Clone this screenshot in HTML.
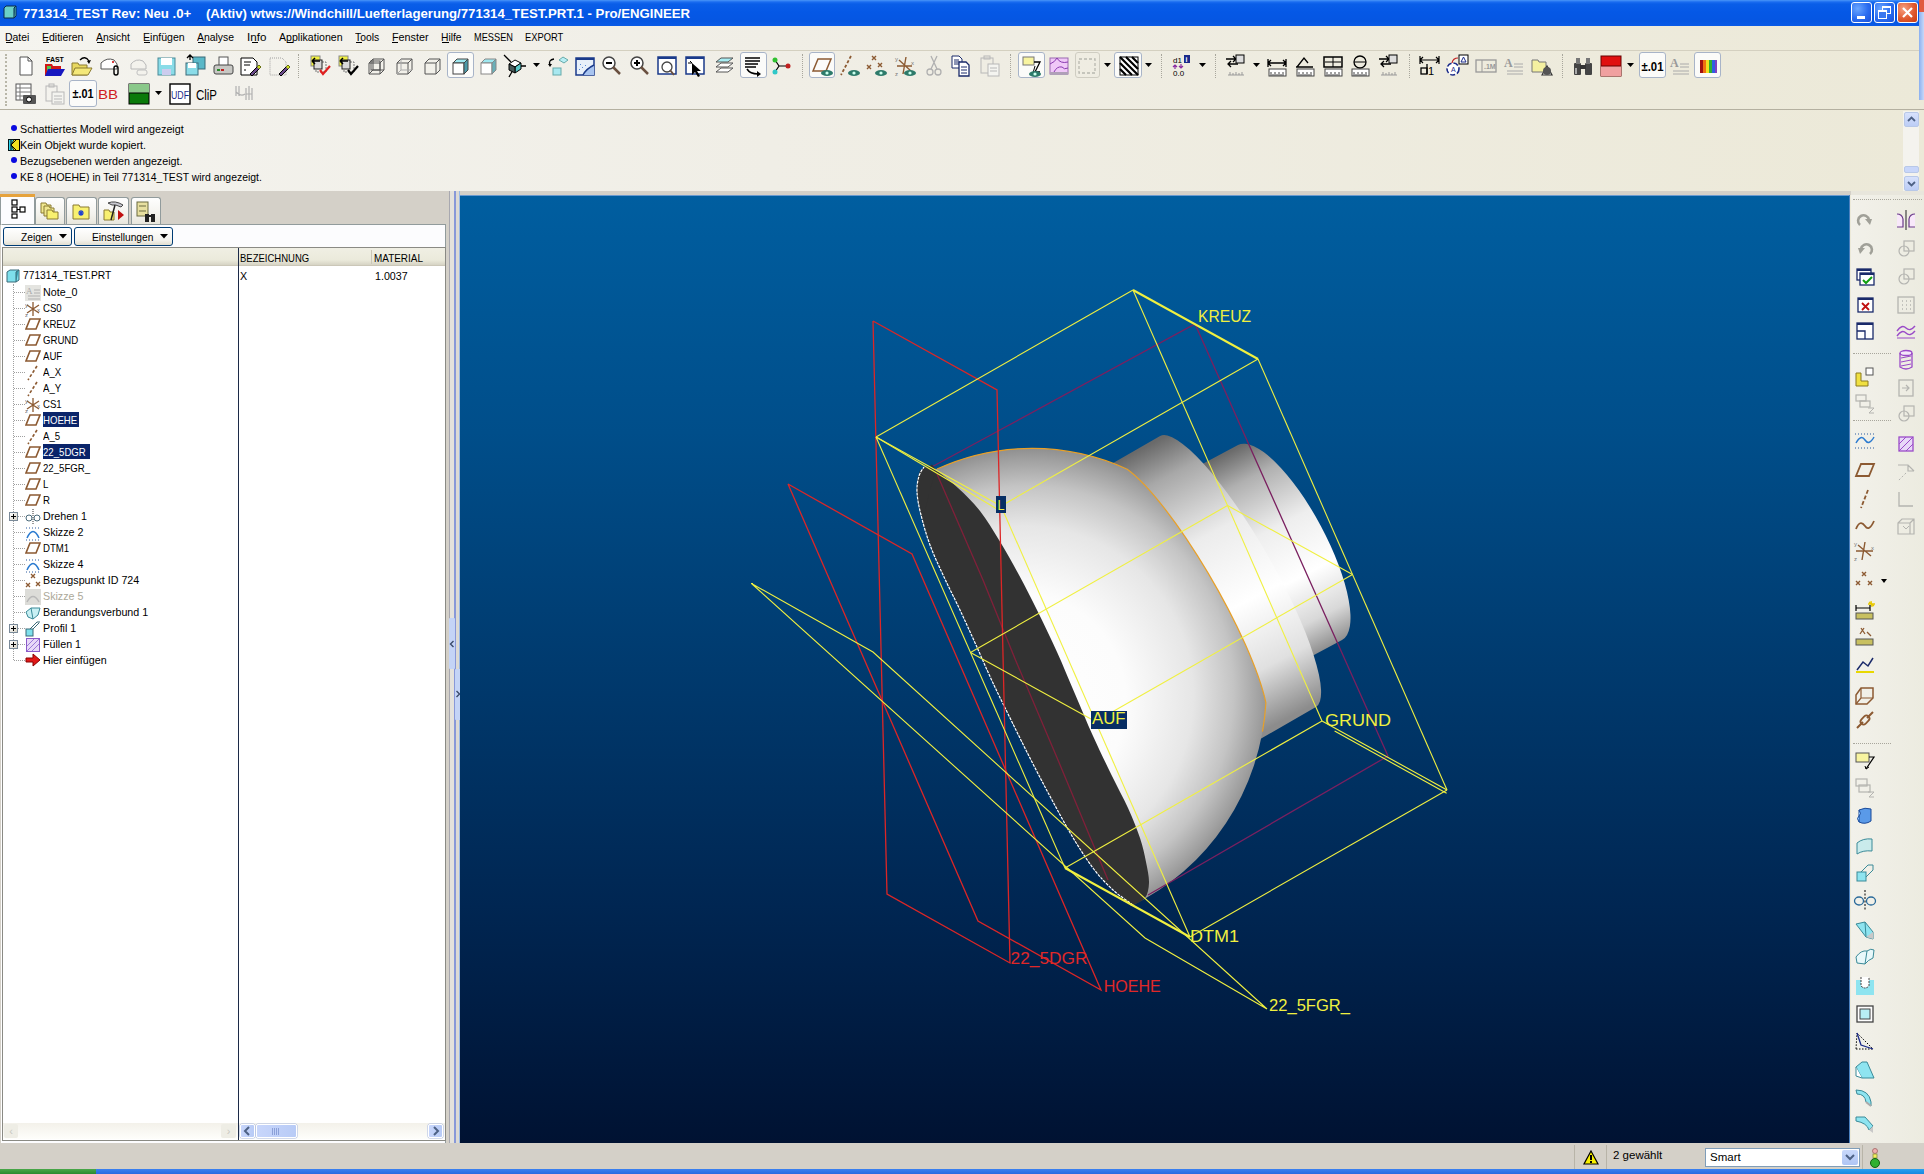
<!DOCTYPE html>
<html><head><meta charset="utf-8">
<style>
*{box-sizing:border-box}
html,body{margin:0;padding:0}
body{width:1924px;height:1174px;overflow:hidden;position:relative;background:#ECE9D8;font-family:"Liberation Sans",sans-serif;font-size:11px;color:#000}
.abs{position:absolute}
#title{left:0;top:0;width:1924px;height:26px;background:linear-gradient(#4a96f8 0px,#1a6cf0 2px,#0a5ee8 4px,#0558e6 12px,#0556e2 21px,#0a5ae6 26px)}
#title .t{position:absolute;left:23px;top:6px;color:#fff;font-weight:bold;font-size:13.2px;white-space:pre;letter-spacing:0px}
#menu{left:0;top:26px;width:1924px;height:24px;background:linear-gradient(90deg,#F5F4EF 0%,#F0EEE6 40%,#ECE9D8 100%)}
#menu span{position:absolute;white-space:pre}
#tb{left:0;top:50px;width:1924px;height:60px;background:linear-gradient(#F4F3EE,#EAE8DD 45px,#E3E0D2);border-bottom:1px solid #B9B6A9}
#msg{left:0;top:110px;width:1924px;height:81px;background:linear-gradient(90deg,#F4F3EE 0%,#F0EEE6 40%,#ECE9D8 100%)}
#msg div{position:absolute;left:20px;font-size:10.75px;white-space:pre}
#left{left:0;top:191px;width:460px;height:952px;background:#D4D0C8}
#view{left:460px;top:195px;width:1390px;height:948px;background:linear-gradient(#0062a6 0%,#00508f 20%,#003d74 45%,#002a58 70%,#001a40 90%,#001535 100%)}
#rtb{left:1850px;top:191px;width:74px;height:952px;background:#ECE9D8}
#status{left:0;top:1143px;width:1924px;height:25px;background:#D4D0C8}
#strip{left:0;top:1168px;width:1924px;height:6px;background:#2D6BDC}
</style></head><body>
<div class="abs" id="title"><div class="t">771314_TEST Rev: Neu .0+    (Aktiv) wtws://Windchill/Luefterlagerung/771314_TEST.PRT.1 - Pro/ENGINEER</div></div>
<div class="abs" id="menu">
<span style="left:5.2px;top:5px;font-size:11px;transform:scaleX(0.949);transform-origin:0 0">Datei</span>
<div class="abs" style="left:5.7px;top:16px;width:7px;height:1px;background:#000"></div>
<span style="left:42.2px;top:5px;font-size:11px;transform:scaleX(0.954);transform-origin:0 0">Editieren</span>
<div class="abs" style="left:42.7px;top:16px;width:6px;height:1px;background:#000"></div>
<span style="left:96.4px;top:5px;font-size:11px;transform:scaleX(0.939);transform-origin:0 0">Ansicht</span>
<div class="abs" style="left:96.9px;top:16px;width:7px;height:1px;background:#000"></div>
<span style="left:143.0px;top:5px;font-size:11px;transform:scaleX(0.959);transform-origin:0 0">Einfügen</span>
<div class="abs" style="left:143.5px;top:16px;width:6px;height:1px;background:#000"></div>
<span style="left:197.4px;top:5px;font-size:11px;transform:scaleX(0.946);transform-origin:0 0">Analyse</span>
<div class="abs" style="left:197.9px;top:16px;width:7px;height:1px;background:#000"></div>
<span style="left:247.2px;top:5px;font-size:11px;transform:scaleX(1.054);transform-origin:0 0">Info</span>
<div class="abs" style="left:252.2px;top:16px;width:5.5px;height:1px;background:#000"></div>
<span style="left:279.2px;top:5px;font-size:11px;transform:scaleX(0.962);transform-origin:0 0">Applikationen</span>
<div class="abs" style="left:286.7px;top:16px;width:6px;height:1px;background:#000"></div>
<span style="left:355.3px;top:5px;font-size:11px;transform:scaleX(0.938);transform-origin:0 0">Tools</span>
<div class="abs" style="left:355.8px;top:16px;width:6px;height:1px;background:#000"></div>
<span style="left:391.9px;top:5px;font-size:11px;transform:scaleX(0.981);transform-origin:0 0">Fenster</span>
<div class="abs" style="left:392.4px;top:16px;width:6px;height:1px;background:#000"></div>
<span style="left:441.0px;top:5px;font-size:11px;transform:scaleX(0.936);transform-origin:0 0">Hilfe</span>
<div class="abs" style="left:441.5px;top:16px;width:7px;height:1px;background:#000"></div>
<span style="left:473.8px;top:5px;font-size:11px;transform:scaleX(0.839);transform-origin:0 0">MESSEN</span>
<span style="left:525.2px;top:5px;font-size:11px;transform:scaleX(0.851);transform-origin:0 0">EXPORT</span>
</div>
<div class="abs" style="left:0;top:50px;width:1924px;height:60px;background:linear-gradient(90deg,#F4F3EE 0%,#F0EEE6 40%,#ECE9D8 100%);border-top:1px solid #d4d0c0;border-bottom:1px solid #b4b0a0"></div>
<div class="abs" style="left:5px;top:54px;width:2px;height:52px;border-left:2px dotted #b8b6a8"></div>
<div class="abs" style="left:447px;top:52px;width:27px;height:26px;background:#fbfbf9;border:1px solid #a8b4c8;border-radius:3px"></div>
<div class="abs" style="left:740px;top:52px;width:27px;height:26px;background:#fbfbf9;border:1px solid #a8b4c8;border-radius:3px"></div>
<div class="abs" style="left:809px;top:52px;width:26px;height:26px;background:#fbfbf9;border:1px solid #a8b4c8;border-radius:3px"></div>
<div class="abs" style="left:1018px;top:52px;width:27px;height:26px;background:#fbfbf9;border:1px solid #a8b4c8;border-radius:3px"></div>
<div class="abs" style="left:1114px;top:52px;width:28px;height:26px;background:#fbfbf9;border:1px solid #a8b4c8;border-radius:3px"></div>
<div class="abs" style="left:1639px;top:52px;width:27px;height:26px;background:#fbfbf9;border:1px solid #a8b4c8;border-radius:3px"></div>
<div class="abs" style="left:1694px;top:52px;width:27px;height:26px;background:#fbfbf9;border:1px solid #a8b4c8;border-radius:3px"></div>
<div class="abs" style="left:1075px;top:52px;width:25px;height:26px;border:1px solid #cfcdc2;border-radius:3px"></div>
<div class="abs" style="left:298px;top:54px;width:1px;height:24px;border-left:1px dotted #a8a69c"></div>
<div class="abs" style="left:802px;top:54px;width:1px;height:24px;border-left:1px dotted #a8a69c"></div>
<div class="abs" style="left:1010px;top:54px;width:1px;height:24px;border-left:1px dotted #a8a69c"></div>
<div class="abs" style="left:1161px;top:54px;width:1px;height:24px;border-left:1px dotted #a8a69c"></div>
<div class="abs" style="left:1215px;top:54px;width:1px;height:24px;border-left:1px dotted #a8a69c"></div>
<div class="abs" style="left:1409px;top:54px;width:1px;height:24px;border-left:1px dotted #a8a69c"></div>
<div class="abs" style="left:1562px;top:54px;width:1px;height:24px;border-left:1px dotted #a8a69c"></div>
<svg class="abs" style="left:533px;top:63px" width="7" height="4" viewBox="0 0 7 4"><path d="M0,0 H7 L3.5,4 Z" fill="#000"/></svg>
<svg class="abs" style="left:1104px;top:63px" width="7" height="4" viewBox="0 0 7 4"><path d="M0,0 H7 L3.5,4 Z" fill="#000"/></svg>
<svg class="abs" style="left:1145px;top:63px" width="7" height="4" viewBox="0 0 7 4"><path d="M0,0 H7 L3.5,4 Z" fill="#000"/></svg>
<svg class="abs" style="left:1199px;top:63px" width="7" height="4" viewBox="0 0 7 4"><path d="M0,0 H7 L3.5,4 Z" fill="#000"/></svg>
<svg class="abs" style="left:1253px;top:63px" width="7" height="4" viewBox="0 0 7 4"><path d="M0,0 H7 L3.5,4 Z" fill="#000"/></svg>
<svg class="abs" style="left:1627px;top:63px" width="7" height="4" viewBox="0 0 7 4"><path d="M0,0 H7 L3.5,4 Z" fill="#000"/></svg>
<svg class="abs" style="left:14px;top:54px" width="24" height="24" viewBox="0 0 24 24"><path d="M6,3 H14 L18,7 V21 H6 Z" fill="#fff" stroke="#555"/><path d="M14,3 V7 H18" fill="none" stroke="#555"/></svg>
<svg class="abs" style="left:43px;top:54px" width="24" height="24" viewBox="0 0 24 24"><text x="3" y="8" font-size="7" font-weight="bold" font-family="Liberation Sans">FAST</text><path d="M2,10 H9 L10,12 H18 V22 H2 Z" fill="#d01818"/><path d="M4,12 H8 V20 H4Z" fill="#50c850"/><path d="M5,15 H22 L18,22 H2 Z" fill="#1818c0"/></svg>
<svg class="abs" style="left:70px;top:54px" width="24" height="24" viewBox="0 0 24 24"><path d="M2,9 H8 L9,11 H17 V21 H2 Z" fill="#e8d860" stroke="#8a7a30"/><path d="M5,14 H22 L18,21 H2 Z" fill="#f4e878" stroke="#8a7a30"/><path d="M10,6 Q15,1 19,7" fill="none" stroke="#000" stroke-width="1.3"/><path d="M17,7 L21,6 L19,10Z" fill="#000"/></svg>
<svg class="abs" style="left:98px;top:54px" width="24" height="24" viewBox="0 0 24 24"><path d="M3,9 Q9,3 16,6 L19,10 V15 H3 Z" fill="#fff" stroke="#555"/><circle cx="15" cy="8" r="1" fill="#c00"/><rect x="16" y="12" width="4" height="9" rx="2" fill="none" stroke="#000" stroke-width="1.4"/></svg>
<svg class="abs" style="left:127px;top:54px" width="24" height="24" viewBox="0 0 24 24"><path d="M4,10 Q9,4 16,7 L19,11 V15 H4 Z" fill="none" stroke="#b8b8b8"/><rect x="10" y="16" width="10" height="5" rx="2" fill="none" stroke="#c0c0c0"/></svg>
<svg class="abs" style="left:154px;top:54px" width="24" height="24" viewBox="0 0 24 24"><rect x="4" y="4" width="17" height="17" fill="#8adce8" stroke="#4a8a98"/><rect x="7" y="4" width="11" height="7" fill="#fff"/><rect x="8" y="15" width="9" height="6" fill="#cce"/></svg>
<svg class="abs" style="left:183px;top:54px" width="24" height="24" viewBox="0 0 24 24"><rect x="10" y="3" width="12" height="12" fill="#5ab8c8" stroke="#3a6a78"/><rect x="3" y="9" width="12" height="12" fill="#8adce8" stroke="#3a6a78"/><rect x="5" y="9" width="8" height="5" fill="#fff"/><path d="M7,1 V6 M4,4 L7,1 L10,4" fill="none" stroke="#000" stroke-width="1.3"/></svg>
<svg class="abs" style="left:211px;top:54px" width="24" height="24" viewBox="0 0 24 24"><rect x="8" y="3" width="9" height="9" fill="#fff" stroke="#555"/><rect x="3" y="11" width="19" height="9" rx="2" fill="#c8c8c4" stroke="#444"/><rect x="6" y="15" width="3" height="2" fill="#2a8a2a"/><rect x="10" y="15" width="3" height="2" fill="#c02020"/></svg>
<svg class="abs" style="left:238px;top:54px" width="24" height="24" viewBox="0 0 24 24"><path d="M3,4 H15 L19,8 V21 H3 Z" fill="#fff" stroke="#000"/><path d="M6,8 H13 M6,11 H12 M6,16 H8" stroke="#000"/><path d="M12,20 L21,11 L23,13 L14,22 Z" fill="#6a4a8a" stroke="#000"/><path d="M19,13 L21,11 L23,13 L21,15Z" fill="#d0e020"/></svg>
<svg class="abs" style="left:267px;top:54px" width="24" height="24" viewBox="0 0 24 24"><path d="M3,4 H15 L19,8 V21 H3 Z" fill="none" stroke="#a0a0a0" stroke-dasharray="1,1"/><path d="M12,20 L21,11 L23,13 L14,22 Z" fill="#6a4a8a" stroke="#000"/><path d="M19,13 L21,11 L23,13 L21,15Z" fill="#d0e020"/></svg>
<svg class="abs" style="left:308px;top:54px" width="24" height="24" viewBox="0 0 24 24"><rect x="3" y="2" width="9" height="10" fill="#f0f040" stroke="#888"/><rect x="8" y="8" width="10" height="10" fill="none" stroke="#777" stroke-dasharray="2,1"/><rect x="6" y="6" width="8" height="9" fill="#d8d8d8" stroke="#222"/><path d="M4,7 H12 M4,7 L7,4 M4,7 L7,10" stroke="#000" stroke-width="1.5" fill="none"/><path d="M12,16 L15,20 L22,12" fill="none" stroke="#e02020" stroke-width="2.2"/></svg>
<svg class="abs" style="left:336px;top:54px" width="24" height="24" viewBox="0 0 24 24"><rect x="3" y="2" width="9" height="10" fill="#f0f040" stroke="#888"/><rect x="8" y="8" width="10" height="10" fill="none" stroke="#777" stroke-dasharray="2,1"/><rect x="6" y="6" width="8" height="9" fill="#d8d8d8" stroke="#222"/><path d="M4,7 H12 M4,7 L7,4 M4,7 L7,10" stroke="#000" stroke-width="1.5" fill="none"/><path d="M12,16 L15,20 L22,12" fill="none" stroke="#000" stroke-width="2.2"/></svg>
<svg class="abs" style="left:364px;top:54px" width="24" height="24" viewBox="0 0 24 24"><path d="M5,9 L9,5 H20 V16 L16,20 H5 Z" fill="none" stroke="#555"/><path d="M5,9 H16 V20 M16,9 L20,5" fill="none" stroke="#555"/><path d="M9,5 V16 H20 M5,20 L9,16" stroke="#555" fill="none"/><rect x="7" y="7" width="9" height="9" fill="none" stroke="#555"/></svg>
<svg class="abs" style="left:392px;top:54px" width="24" height="24" viewBox="0 0 24 24"><path d="M5,9 L9,5 H20 V16 L16,20 H5 Z" fill="none" stroke="#555"/><path d="M5,9 H16 V20 M16,9 L20,5" fill="none" stroke="#555"/><path d="M9,5 V16 H20 M5,20 L9,16" stroke="#aaa" fill="none"/></svg>
<svg class="abs" style="left:420px;top:54px" width="24" height="24" viewBox="0 0 24 24"><path d="M5,9 L9,5 H20 V16 L16,20 H5 Z" fill="none" stroke="#555"/><path d="M5,9 H16 V20 M16,9 L20,5" fill="none" stroke="#555"/></svg>
<svg class="abs" style="left:448px;top:54px" width="24" height="24" viewBox="0 0 24 24"><path d="M5,9 L9,5 H20 L16,9 Z" fill="#9ee8f0" stroke="#444"/><rect x="5" y="9" width="11" height="11" fill="#fff" stroke="#444"/><path d="M16,9 L20,5 V16 L16,20Z" fill="#4a9aa8" stroke="#444"/></svg>
<svg class="abs" style="left:476px;top:54px" width="24" height="24" viewBox="0 0 24 24"><path d="M5,9 L9,5 H20 L16,9 Z" fill="#9ee8f0" stroke="#888"/><rect x="5" y="9" width="11" height="11" fill="#fff" stroke="#888"/><path d="M16,9 L20,5 V16 L16,20Z" fill="#6ab0b8" stroke="#888"/></svg>
<svg class="abs" style="left:503px;top:54px" width="24" height="24" viewBox="0 0 24 24"><path d="M1,1 L8,8 M16,12 L23,12 M10,16 L6,23" stroke="#000" stroke-width="1.3"/><path d="M6,10 L12,6 L18,9 L12,13 Z" fill="#fff" stroke="#000"/><path d="M12,13 L18,9 V15 L12,19Z" fill="#5ac8c8" stroke="#000"/><path d="M6,10 L12,13 V19 L6,16Z" fill="#4a5a5a" stroke="#000"/></svg>
<svg class="abs" style="left:545px;top:54px" width="24" height="24" viewBox="0 0 24 24"><path d="M14,6 L18,3 L23,6 L19,9Z" fill="#b8eef4" stroke="#6aa"/><rect x="8" y="14" width="8" height="7" fill="#a8e8f0" stroke="#6aa"/><path d="M9,5 Q3,6 5,11" fill="none" stroke="#000" stroke-width="1.3"/><path d="M3,10 L5,13 L7,10Z" fill="#000"/></svg>
<svg class="abs" style="left:573px;top:54px" width="24" height="24" viewBox="0 0 24 24"><rect x="3" y="4" width="18" height="17" fill="#e8f0fa" stroke="#1a3a8a" stroke-width="1.5"/><rect x="3" y="4" width="18" height="2" fill="#1a3a8a"/><path d="M10,21 Q14,13 21,11 V21Z" fill="#a8c4f0"/><path d="M7,10 l1,1 M9,13 l1,1 M12,11 l1,1 M6,15 l1,1" stroke="#5a8ad8"/><path d="M10,21 Q13,15 21,11" fill="none" stroke="#1a3a8a" stroke-width="1.4"/></svg>
<svg class="abs" style="left:600px;top:54px" width="24" height="24" viewBox="0 0 24 24"><circle cx="9" cy="9" r="6" fill="#fff" stroke="#444" stroke-width="1.5"/><path d="M13,13 L20,20" stroke="#6a5040" stroke-width="2.5"/><path d="M6,9 H12" stroke="#000" stroke-width="2"/></svg>
<svg class="abs" style="left:628px;top:54px" width="24" height="24" viewBox="0 0 24 24"><circle cx="9" cy="9" r="6" fill="#fff" stroke="#444" stroke-width="1.5"/><path d="M13,13 L20,20" stroke="#6a5040" stroke-width="2.5"/><path d="M6,9 H12 M9,6 V12" stroke="#000" stroke-width="2"/></svg>
<svg class="abs" style="left:656px;top:54px" width="24" height="24" viewBox="0 0 24 24"><rect x="2" y="3" width="18" height="17" fill="#fff" stroke="#1a3a8a" stroke-width="1.5"/><rect x="2" y="3" width="18" height="2" fill="#1a3a8a"/><circle cx="11" cy="13" r="5" fill="none" stroke="#444" stroke-width="1.3"/><path d="M14,16 L18,21" stroke="#6a5040" stroke-width="2"/></svg>
<svg class="abs" style="left:684px;top:54px" width="24" height="24" viewBox="0 0 24 24"><rect x="2" y="3" width="18" height="17" fill="#fff" stroke="#1a3a8a" stroke-width="1.5"/><rect x="2" y="3" width="18" height="2" fill="#1a3a8a"/><path d="M8,9 V21 L11,18 L14,23 L16,22 L13,17 L17,17 Z" fill="#000"/><path d="M6,7 L8,9 M4,9 H8" stroke="#000"/></svg>
<svg class="abs" style="left:712px;top:54px" width="24" height="24" viewBox="0 0 24 24"><path d="M4,8 L9,4 H21 L16,8Z" fill="#a8eef4" stroke="#555"/><path d="M4,13 L9,9 H21 L16,13Z" fill="#fff" stroke="#555"/><path d="M4,18 L9,14 H21 L16,18Z" fill="#fff" stroke="#555"/></svg>
<svg class="abs" style="left:740px;top:54px" width="24" height="24" viewBox="0 0 24 24"><path d="M5,4 H20 M5,7 H20 M5,10 H18 M5,13 H16" stroke="#000" stroke-width="1.3"/><path d="M7,15 Q10,20 18,20" fill="none" stroke="#000" stroke-width="1.5"/><path d="M17,17 L21,20 L17,23Z" fill="#000"/></svg>
<svg class="abs" style="left:769px;top:54px" width="24" height="24" viewBox="0 0 24 24"><path d="M6,6 L10,12 L6,18 M10,12 H19" stroke="#000" stroke-width="1.2" fill="none"/><circle cx="6" cy="6" r="2.5" fill="#30c030"/><circle cx="6" cy="18" r="2.5" fill="#30c8c8"/><circle cx="19" cy="12" r="2.5" fill="#c02020"/></svg>
<svg class="abs" style="left:810px;top:54px" width="24" height="24" viewBox="0 0 24 24"><path d="M8,5 H21 L16,17 H3 Z" fill="none" stroke="#8c5a32" stroke-width="1.5"/><ellipse cx="17" cy="19" rx="6" ry="3" fill="#2d7a6a"/><circle cx="17" cy="19" r="1.6" fill="#cfe"/></svg>
<svg class="abs" style="left:838px;top:54px" width="24" height="24" viewBox="0 0 24 24"><path d="M13,2 L3,21" stroke="#8c5a32" stroke-width="1.8" stroke-dasharray="3,2"/><ellipse cx="16" cy="19" rx="6" ry="3" fill="#2d7a6a"/><circle cx="16" cy="19" r="1.6" fill="#cfe"/></svg>
<svg class="abs" style="left:865px;top:54px" width="24" height="24" viewBox="0 0 24 24"><path d="M7,2 l4,4 m0,-4 l-4,4 M2,11 l4,4 m0,-4 l-4,4 M13,9 l4,4 m0,-4 l-4,4" stroke="#8c5a32" stroke-width="1.4"/><ellipse cx="16" cy="19" rx="6" ry="3" fill="#2d7a6a"/><circle cx="16" cy="19" r="1.6" fill="#cfe"/></svg>
<svg class="abs" style="left:894px;top:54px" width="24" height="24" viewBox="0 0 24 24"><path d="M12,3 L9,20 M3,12 H18 M5,6 L17,17" stroke="#8c5a32" stroke-width="1.4"/><text x="1" y="7" font-size="6" fill="#777">y</text><text x="1" y="22" font-size="6" fill="#777">z</text><text x="17" y="11" font-size="6" fill="#777">x</text><ellipse cx="16" cy="19" rx="6" ry="3" fill="#2d7a6a"/><circle cx="16" cy="19" r="1.6" fill="#cfe"/></svg>
<svg class="abs" style="left:922px;top:54px" width="24" height="24" viewBox="0 0 24 24"><circle cx="8" cy="18" r="3" fill="none" stroke="#b0b0b0" stroke-width="1.3"/><circle cx="16" cy="18" r="3" fill="none" stroke="#b0b0b0" stroke-width="1.3"/><path d="M9,15 L15,2 M15,15 L9,2" stroke="#b0b0b0" stroke-width="1.3"/></svg>
<svg class="abs" style="left:950px;top:54px" width="24" height="24" viewBox="0 0 24 24"><path d="M2,2 H9 L12,5 V14 H2Z" fill="#fff" stroke="#1a2a6a"/><path d="M4,6 H9 M4,8 H10 M4,10 H10" stroke="#1a2a6a"/><path d="M9,8 H16 L19,11 V22 H9Z" fill="#fff" stroke="#1a2a6a" stroke-width="1.3"/><path d="M11,13 H17 M11,16 H17 M11,19 H17" stroke="#1a2a6a"/></svg>
<svg class="abs" style="left:978px;top:54px" width="24" height="24" viewBox="0 0 24 24"><rect x="3" y="4" width="12" height="15" fill="none" stroke="#b8b8b8"/><rect x="6" y="2" width="6" height="3" fill="none" stroke="#b8b8b8"/><rect x="10" y="10" width="11" height="12" fill="#f4f4f0" stroke="#b8b8b8"/><path d="M12,14 H19 M12,17 H19" stroke="#b8b8b8"/></svg>
<svg class="abs" style="left:1019px;top:54px" width="24" height="24" viewBox="0 0 24 24"><rect x="4" y="3" width="11" height="8" fill="#f8f4a0" stroke="#777"/><path d="M15,8 H21 L16,18 H21" fill="none" stroke="#000" stroke-width="1.3"/><path d="M16,12 L14,19" stroke="#000"/><ellipse cx="16" cy="20" rx="6" ry="3" fill="#2d7a6a"/><circle cx="16" cy="20" r="1.6" fill="#cfe"/></svg>
<svg class="abs" style="left:1047px;top:54px" width="24" height="24" viewBox="0 0 24 24"><rect x="3" y="4" width="18" height="16" fill="#f0c8f8" stroke="#9a6ab0"/><rect x="3" y="18" width="18" height="3" fill="#b0a0b8"/><path d="M3,10 Q8,8 10,4 M10,4 Q13,10 21,8 M7,18 Q10,12 15,13 Q17,16 21,14" fill="none" stroke="#8a3ab0"/></svg>
<svg class="abs" style="left:1075px;top:54px" width="24" height="24" viewBox="0 0 24 24"><rect x="4" y="5" width="16" height="14" fill="none" stroke="#b8b8b0" stroke-width="1.3" stroke-dasharray="3,2"/></svg>
<svg class="abs" style="left:1117px;top:54px" width="24" height="24" viewBox="0 0 24 24"><rect x="3" y="3" width="18" height="18" fill="#fff" stroke="#000"/><path d="M3,15 L9,21 M3,9 L15,21 M3,3 L21,21 M9,3 L21,15 M15,3 L21,9" stroke="#000" stroke-width="2.2"/></svg>
<svg class="abs" style="left:1170px;top:54px" width="24" height="24" viewBox="0 0 24 24"><text x="3" y="9" font-size="8" font-family="Liberation Sans">d1</text><rect x="14" y="1" width="6" height="8" fill="#1a2a8a"/><text x="15.5" y="8" font-size="7" fill="#fff" font-weight="bold">i</text><path d="M5,15 V11 M3,13 L5,11 L7,13 M11,10 V14 M9,12 L11,14 L13,12" stroke="#8a2aa0" stroke-width="1.2" fill="none"/><text x="3" y="22" font-size="8" font-family="Liberation Sans">0.0</text></svg>
<svg class="abs" style="left:1224px;top:54px" width="24" height="24" viewBox="0 0 24 24"><path d="M2,5 H12 M9,2 L12,5 L9,8 M14,10 H4 M7,7 L4,10 L7,13" stroke="#000" stroke-width="1.3" fill="none"/><rect x="12" y="1" width="8" height="8" fill="#ddd" stroke="#000"/><path d="M4,21 H20 M6,18 V21 M9,19 V21 M12,18 V21 M15,19 V21 M18,18 V21" stroke="#999"/></svg>
<svg class="abs" style="left:1265px;top:54px" width="24" height="24" viewBox="0 0 24 24"><path d="M3,5 V13 M21,5 V13 M3,9 H21 M6,6 L3,9 L6,12 M18,6 L21,9 L18,12" stroke="#000" stroke-width="1.3" fill="none"/><rect x="4" y="15" width="17" height="7" fill="#fff" stroke="#444"/><path d="M6,18 V22 M8,20 V22 M10,18 V22 M12,20 V22 M14,18 V22 M16,20 V22 M18,18 V22" stroke="#444"/></svg>
<svg class="abs" style="left:1293px;top:54px" width="24" height="24" viewBox="0 0 24 24"><path d="M3,13 H20 M4,13 L11,4 L15,9" stroke="#000" stroke-width="1.3" fill="none"/><rect x="4" y="15" width="17" height="7" fill="#fff" stroke="#444"/><path d="M6,18 V22 M8,20 V22 M10,18 V22 M12,20 V22 M14,18 V22 M16,20 V22 M18,18 V22" stroke="#444"/></svg>
<svg class="abs" style="left:1321px;top:54px" width="24" height="24" viewBox="0 0 24 24"><rect x="3" y="3" width="18" height="10" fill="none" stroke="#000" stroke-width="1.5"/><path d="M12,3 V13 M4,8 H20" stroke="#000"/><rect x="4" y="15" width="17" height="7" fill="#fff" stroke="#444"/><path d="M6,18 V22 M8,20 V22 M10,18 V22 M12,20 V22 M14,18 V22 M16,20 V22 M18,18 V22" stroke="#444"/></svg>
<svg class="abs" style="left:1348px;top:54px" width="24" height="24" viewBox="0 0 24 24"><circle cx="12" cy="8" r="6" fill="none" stroke="#000" stroke-width="1.3"/><path d="M6,8 H18" stroke="#000"/><rect x="4" y="15" width="17" height="7" fill="#fff" stroke="#444"/><path d="M6,18 V22 M8,20 V22 M10,18 V22 M12,20 V22 M14,18 V22 M16,20 V22 M18,18 V22" stroke="#444"/></svg>
<svg class="abs" style="left:1377px;top:54px" width="24" height="24" viewBox="0 0 24 24"><path d="M2,5 H12 M9,2 L12,5 L9,8 M14,10 H4 M7,7 L4,10 L7,13" stroke="#000" stroke-width="1.3" fill="none"/><rect x="12" y="1" width="8" height="8" fill="#ddd" stroke="#000"/><path d="M4,21 H20 M6,18 V21 M9,19 V21 M12,18 V21 M15,19 V21 M18,18 V21" stroke="#999"/></svg>
<svg class="abs" style="left:1418px;top:54px" width="24" height="24" viewBox="0 0 24 24"><path d="M2,2 V10 M21,2 V10 M2,6 H21 M5,3 L2,6 L5,9 M18,3 L21,6 L18,9" stroke="#000" stroke-width="1.2" fill="none"/><rect x="3" y="14" width="6" height="6" fill="none" stroke="#000" stroke-width="1.3"/><text x="10" y="21" font-size="11" font-family="Liberation Sans">1</text><path d="M9,10 V20" stroke="#000" stroke-width="1.3"/></svg>
<svg class="abs" style="left:1446px;top:54px" width="24" height="24" viewBox="0 0 24 24"><circle cx="7" cy="15" r="6" fill="#fff" stroke="#1a2a8a" stroke-width="1.6" stroke-dasharray="5,2"/><text x="5" y="18" font-size="7" fill="#1a2a8a">A</text><rect x="13" y="1" width="9" height="9" fill="#fff" stroke="#000"/><path d="M15,8 L17.5,3 L20,8Z" fill="none" stroke="#1a2a8a"/><path d="M12,4 Q7,4 6,9" fill="none" stroke="#c02020" stroke-width="1.2"/></svg>
<svg class="abs" style="left:1474px;top:54px" width="24" height="24" viewBox="0 0 24 24"><rect x="2" y="6" width="20" height="12" fill="none" stroke="#999" stroke-width="1.3"/><path d="M8,6 V18" stroke="#999"/><text x="10" y="15" font-size="7" font-weight="bold" fill="#999">.1M</text></svg>
<svg class="abs" style="left:1502px;top:54px" width="24" height="24" viewBox="0 0 24 24"><text x="2" y="13" font-size="12" font-weight="bold" fill="#999" font-family="Liberation Serif">A</text><path d="M12,10 H21 M12,13 H21 M5,17 H21 M5,20 H21" stroke="#aaa"/></svg>
<svg class="abs" style="left:1530px;top:54px" width="24" height="24" viewBox="0 0 24 24"><path d="M2,6 H8 L9,8 H16 V18 H2 Z" fill="#f4f0a0" stroke="#777"/><path d="M12,21 L17,12 L22,21Z" fill="#fff" stroke="#333" stroke-width="1.2"/><circle cx="17" cy="17" r="4" fill="#555"/></svg>
<svg class="abs" style="left:1571px;top:54px" width="24" height="24" viewBox="0 0 24 24"><rect x="3" y="9" width="7" height="12" rx="1" fill="#444"/><rect x="14" y="9" width="7" height="12" rx="1" fill="#444"/><rect x="5" y="4" width="4" height="6" fill="#777"/><rect x="15" y="4" width="4" height="6" fill="#777"/><rect x="9" y="11" width="6" height="4" fill="#333"/><rect x="4" y="14" width="2" height="6" fill="#aaa"/></svg>
<svg class="abs" style="left:1599px;top:54px" width="24" height="24" viewBox="0 0 24 24"><rect x="2" y="2" width="20" height="20" fill="#e01010" stroke="#600"/><rect x="2" y="12" width="20" height="10" fill="#f0a0a0"/><path d="M2,12 H22" stroke="#600"/></svg>
<svg class="abs" style="left:1640px;top:54px" width="24" height="24" viewBox="0 0 24 24"><text x="1.5" y="17" font-size="13" font-weight="bold" font-family="Liberation Sans" textLength="22" lengthAdjust="spacingAndGlyphs">±.01</text></svg>
<svg class="abs" style="left:1668px;top:54px" width="24" height="24" viewBox="0 0 24 24"><text x="2" y="13" font-size="12" font-weight="bold" fill="#999" font-family="Liberation Serif">A</text><path d="M12,10 H21 M12,13 H21 M5,17 H21 M5,20 H21" stroke="#aaa"/></svg>
<svg class="abs" style="left:1696px;top:54px" width="24" height="24" viewBox="0 0 24 24"><rect x="4" y="6" width="3" height="13" fill="#a01010"/><rect x="7" y="6" width="3" height="13" fill="#f07010"/><rect x="10" y="6" width="3" height="13" fill="#f0e020"/><rect x="13" y="6" width="3" height="13" fill="#30b030"/><rect x="16" y="6" width="3" height="13" fill="#3060e0"/><rect x="19" y="6" width="2" height="13" fill="#8040c0"/></svg>
<div class="abs" style="left:69px;top:80px;width:28px;height:27px;background:#fbfbf9;border:1px solid #a8b4c8;border-radius:3px"></div>
<svg class="abs" style="left:14px;top:82px" width="24" height="24" viewBox="0 0 24 24"><rect x="2" y="2" width="15" height="16" fill="#fff" stroke="#555"/><path d="M2,6 H17 M2,10 H17 M2,14 H17 M6,2 V18" stroke="#777"/><rect x="9" y="13" width="13" height="9" rx="1" fill="#555"/><circle cx="15" cy="17.5" r="2.5" fill="#fff" stroke="#000"/></svg>
<svg class="abs" style="left:43px;top:82px" width="24" height="24" viewBox="0 0 24 24"><rect x="3" y="4" width="11" height="15" fill="none" stroke="#b8b8b8"/><rect x="6" y="2" width="5" height="3" fill="none" stroke="#b8b8b8"/><rect x="9" y="10" width="12" height="12" fill="#f4f4f0" stroke="#b8b8b8"/><path d="M11,14 H19 M11,17 H19 M11,20 H19" stroke="#b8b8b8"/></svg>
<svg class="abs" style="left:71px;top:82px" width="24" height="24" viewBox="0 0 24 24"><text x="1.5" y="16" font-size="13" font-weight="bold" font-family="Liberation Sans" textLength="21" lengthAdjust="spacingAndGlyphs">±.01</text></svg>
<svg class="abs" style="left:96px;top:82px" width="24" height="24" viewBox="0 0 24 24"><text x="2" y="17" font-size="13" fill="#d02020" font-family="Liberation Sans" textLength="20" lengthAdjust="spacingAndGlyphs">BB</text></svg>
<svg class="abs" style="left:127px;top:82px" width="24" height="24" viewBox="0 0 24 24"><rect x="2" y="2" width="20" height="20" fill="#0a7a0a" stroke="#000"/><rect x="2" y="2" width="20" height="9" fill="#8ac88a"/><path d="M2,11 H22" stroke="#000"/></svg>
<svg class="abs" style="left:155px;top:91px" width="7" height="4" viewBox="0 0 7 4"><path d="M0,0 H7 L3.5,4 Z" fill="#000"/></svg>
<svg class="abs" style="left:168px;top:82px" width="24" height="24" viewBox="0 0 24 24"><rect x="2" y="2" width="20" height="20" fill="#fff" stroke="#000" stroke-width="1.4"/><text x="3" y="17" font-size="11" fill="#1a2a8a" font-family="Liberation Sans" textLength="18" lengthAdjust="spacingAndGlyphs">UDF</text></svg>
<svg class="abs" style="left:195px;top:82px" width="24" height="24" viewBox="0 0 24 24"><text x="1" y="18" font-size="14" font-family="Liberation Sans" textLength="21" lengthAdjust="spacingAndGlyphs">CliP</text></svg>
<svg class="abs" style="left:233px;top:82px" width="24" height="24" viewBox="0 0 24 24"><path d="M3,4 V14 M6,4 V14 M3,10 Q8,15 12,12 M13,6 V18 M16,4 V18 M19,6 V18 M13,12 H19" stroke="#b0b0b0" stroke-width="1.2" fill="none"/></svg>
<div id="msg" class="abs">
<div style="top:13px">Schattiertes Modell wird angezeigt</div>
<div style="top:29px">Kein Objekt wurde kopiert.</div>
<div style="top:45px">Bezugsebenen werden angezeigt.</div>
<div style="top:61px;transform:scaleX(0.97);transform-origin:0 0">KE 8 (HOEHE) in Teil 771314_TEST wird angezeigt.</div>
</div>
<div class="abs" style="left:0;top:191px;width:1924px;height:4px;background:#D4D0C8"></div>
<div class="abs" style="left:0;top:191px;width:460px;height:953px;background:#D4D0C8"></div>
<div class="abs" style="left:0;top:194px;width:35px;height:31px;background:#FCFCFE;border-left:1px solid #919b9c;border-right:1px solid #919b9c"></div>
<div class="abs" style="left:0;top:194px;width:35px;height:3px;background:#E6A23C"></div>
<div class="abs" style="left:35px;top:197px;width:30px;height:27px;background:linear-gradient(#fefefe,#f4f3ee 60%,#e8e6dc);border:1px solid #919b9c;border-bottom:none;border-radius:3px 3px 0 0"></div>
<div class="abs" style="left:66px;top:197px;width:31px;height:27px;background:linear-gradient(#fefefe,#f4f3ee 60%,#e8e6dc);border:1px solid #919b9c;border-bottom:none;border-radius:3px 3px 0 0"></div>
<div class="abs" style="left:98px;top:197px;width:31px;height:27px;background:linear-gradient(#fefefe,#f4f3ee 60%,#e8e6dc);border:1px solid #919b9c;border-bottom:none;border-radius:3px 3px 0 0"></div>
<div class="abs" style="left:131px;top:197px;width:30px;height:27px;background:linear-gradient(#fefefe,#f4f3ee 60%,#e8e6dc);border:1px solid #919b9c;border-bottom:none;border-radius:3px 3px 0 0"></div>
<svg class="abs" style="left:10px;top:199px" width="18" height="20"><rect x="2" y="1" width="5" height="5" fill="#fff" stroke="#000" stroke-width="1.2"/><rect x="2" y="8" width="5" height="5" fill="#fff" stroke="#000" stroke-width="1.2"/><rect x="2" y="15" width="5" height="4" fill="#fff" stroke="#000" stroke-width="1.2"/><rect x="10" y="8" width="5" height="5" fill="#fff" stroke="#000" stroke-width="1.2"/><path d="M7,10.5 H10" stroke="#000"/></svg>
<svg class="abs" style="left:40px;top:201px" width="20" height="20"><path d="M1,2 h5 l1,2 h4 v8 h-10z" fill="#f0e890" stroke="#8a7a30"/><path d="M4,5 h5 l1,2 h4 v8 h-10z" fill="#f0e890" stroke="#8a7a30"/><path d="M7,9 h5 l1,2 h5 v7 h-11z" fill="#f8f070" stroke="#8a7a30"/></svg>
<svg class="abs" style="left:72px;top:203px" width="20" height="18"><path d="M1,2 h6 l1,2 h9 v12 h-16z" fill="#f8f070" stroke="#8a7a30"/><path d="M9,7 v6 M6,10 h6 M7,8 l4,4 M11,8 l-4,4" stroke="#2040d0" stroke-width="1.2"/></svg>
<svg class="abs" style="left:103px;top:201px" width="22" height="20"><path d="M1,9 h5 l1,2 h4 v8 h-10z" fill="#f8f070" stroke="#8a7a30"/><path d="M5,2 Q12,-1 20,4 L18,6 Q12,3 9,4 Z" fill="#c8c8d0" stroke="#444"/><path d="M12,4 L8,19" stroke="#222" stroke-width="1.5"/><path d="M15,9 L21,14 L15,19 Z" fill="#c01010"/></svg>
<svg class="abs" style="left:136px;top:201px" width="22" height="22"><rect x="1" y="1" width="11" height="14" fill="#e8e0a0" stroke="#6a6a40"/><path d="M3,5 h7 M3,10 h7" stroke="#6a6a40"/><path d="M9,13 h4 v8 h-4z M15,13 h4 v8 h-4z" fill="#222"/><path d="M12,15 h4" stroke="#222" stroke-width="2"/></svg>
<div class="abs" style="left:1px;top:224px;width:445px;height:919px;background:#FCFCFE;border-top:1px solid #919b9c;border-right:1px solid #919b9c;border-left:1px solid #ffffff"></div>
<div class="abs" style="left:3px;top:227px;width:69px;height:19px;border:1px solid #003c74;border-radius:3px;background:linear-gradient(#ffffff,#f4f3ee 70%,#e2ded0)"><span class="abs" style="left:17px;top:2.5px;font-size:11px;transform:scaleX(0.93);transform-origin:0 0;white-space:nowrap">Zeigen</span><svg class="abs" style="left:55px;top:6px" width="8" height="5"><path d="M0,0 H8 L4,4.5 Z" fill="#000"/></svg></div>
<div class="abs" style="left:74px;top:227px;width:99px;height:19px;border:1px solid #003c74;border-radius:3px;background:linear-gradient(#ffffff,#f4f3ee 70%,#e2ded0)"><span class="abs" style="left:17px;top:2.5px;font-size:11px;transform:scaleX(0.93);transform-origin:0 0;white-space:nowrap">Einstellungen</span><svg class="abs" style="left:85px;top:6px" width="8" height="5"><path d="M0,0 H8 L4,4.5 Z" fill="#000"/></svg></div>
<div class="abs" style="left:2px;top:247px;width:444px;height:894px;border:1px solid #8a8a84;background:#fff"></div>
<div class="abs" style="left:3px;top:248px;width:442px;height:18px;background:linear-gradient(#f0efe4,#ebeadb 70%,#d6d3c4);border-bottom:1px solid #cbc7b8"></div>
<div class="abs" style="left:371px;top:250px;width:1px;height:14px;background:#cbc7b8"></div>
<div class="abs" style="left:238px;top:248px;width:1px;height:892px;background:#1c2a48"></div>
<div class="abs" style="left:240px;top:251.5px;font-size:10.7px;transform:scaleX(0.89);transform-origin:0 0">BEZEICHNUNG</div>
<div class="abs" style="left:374px;top:251.5px;font-size:10.7px;transform:scaleX(0.93);transform-origin:0 0">MATERIAL</div>
<div class="abs" style="left:240px;top:269.5px;font-size:10.7px">X</div>
<div class="abs" style="left:375px;top:269.5px;font-size:10.7px">1.0037</div>
<div class="abs" style="left:13px;top:284px;width:1px;height:376px;border-left:1px dotted #a0a0a0"></div>
<div class="abs" style="left:6px;top:268.5px;width:14px;height:14px"><svg width="14" height="14"><path d="M1,3 L4,1 L13,1 L13,11 L10,13 L1,13 Z" fill="#7ee0ec" stroke="#3a6a78" stroke-width="1"/><path d="M10,13 L10,3 L13,1" fill="#3aa0b0" stroke="#3a6a78"/></svg></div>
<div class="abs" style="left:23px;top:269.0px;font-size:10.7px;transform:scaleX(0.96);transform-origin:0 0;white-space:nowrap">771314_TEST.PRT</div>
<div class="abs" style="left:14px;top:291.5px;width:11px;height:1px;border-top:1px dotted #a0a0a0"></div>
<div class="abs" style="left:25px;top:284.5px;width:16px;height:16px"><svg width="16" height="16"><rect x="0" y="0" width="16" height="16" fill="#e4e4e0"/><text x="1" y="9" font-size="9" fill="#a8a8a8" font-family="Liberation Serif">A</text><path d="M9,5 H15 M9,8 H15 M3,11 H15 M3,14 H15" stroke="#b0b0b0"/></svg></div>
<div class="abs" style="left:43px;top:285.8px;font-size:10.7px;color:#000;white-space:nowrap;transform:scaleX(1.0);transform-origin:0 0">Note_0</div>
<div class="abs" style="left:14px;top:307.5px;width:11px;height:1px;border-top:1px dotted #a0a0a0"></div>
<div class="abs" style="left:25px;top:300.5px;width:16px;height:16px"><svg width="16" height="16"><path d="M8,1 L8,15 M2,4 L14,12 M2,12 L14,4" stroke="#8c5a32" stroke-width="1.3"/><text x="0" y="6" font-size="6" fill="#666">y</text><text x="0" y="16" font-size="6" fill="#666">z</text><text x="12" y="11" font-size="6" fill="#666">x</text></svg></div>
<div class="abs" style="left:43px;top:301.8px;font-size:10.7px;color:#000;white-space:nowrap;transform:scaleX(0.9);transform-origin:0 0">CS0</div>
<div class="abs" style="left:14px;top:323.5px;width:11px;height:1px;border-top:1px dotted #a0a0a0"></div>
<div class="abs" style="left:25px;top:316.5px;width:16px;height:16px"><svg width="16" height="14"><path d="M5,2 L15,2 L11,12 L1,12 Z" fill="none" stroke="#8c5a32" stroke-width="1.6"/></svg></div>
<div class="abs" style="left:43px;top:317.8px;font-size:10.7px;color:#000;white-space:nowrap;transform:scaleX(0.9);transform-origin:0 0">KREUZ</div>
<div class="abs" style="left:14px;top:339.5px;width:11px;height:1px;border-top:1px dotted #a0a0a0"></div>
<div class="abs" style="left:25px;top:332.5px;width:16px;height:16px"><svg width="16" height="14"><path d="M5,2 L15,2 L11,12 L1,12 Z" fill="none" stroke="#8c5a32" stroke-width="1.6"/></svg></div>
<div class="abs" style="left:43px;top:333.8px;font-size:10.7px;color:#000;white-space:nowrap;transform:scaleX(0.9);transform-origin:0 0">GRUND</div>
<div class="abs" style="left:14px;top:355.5px;width:11px;height:1px;border-top:1px dotted #a0a0a0"></div>
<div class="abs" style="left:25px;top:348.5px;width:16px;height:16px"><svg width="16" height="14"><path d="M5,2 L15,2 L11,12 L1,12 Z" fill="none" stroke="#8c5a32" stroke-width="1.6"/></svg></div>
<div class="abs" style="left:43px;top:349.8px;font-size:10.7px;color:#000;white-space:nowrap;transform:scaleX(0.9);transform-origin:0 0">AUF</div>
<div class="abs" style="left:14px;top:371.5px;width:11px;height:1px;border-top:1px dotted #a0a0a0"></div>
<div class="abs" style="left:25px;top:364.5px;width:16px;height:16px"><svg width="16" height="16"><path d="M12,1 L3,15" stroke="#8c5a32" stroke-width="1.6" stroke-dasharray="3,2"/></svg></div>
<div class="abs" style="left:43px;top:365.8px;font-size:10.7px;color:#000;white-space:nowrap;transform:scaleX(0.9);transform-origin:0 0">A_X</div>
<div class="abs" style="left:14px;top:387.5px;width:11px;height:1px;border-top:1px dotted #a0a0a0"></div>
<div class="abs" style="left:25px;top:380.5px;width:16px;height:16px"><svg width="16" height="16"><path d="M12,1 L3,15" stroke="#8c5a32" stroke-width="1.6" stroke-dasharray="3,2"/></svg></div>
<div class="abs" style="left:43px;top:381.8px;font-size:10.7px;color:#000;white-space:nowrap;transform:scaleX(0.9);transform-origin:0 0">A_Y</div>
<div class="abs" style="left:14px;top:403.5px;width:11px;height:1px;border-top:1px dotted #a0a0a0"></div>
<div class="abs" style="left:25px;top:396.5px;width:16px;height:16px"><svg width="16" height="16"><path d="M8,1 L8,15 M2,4 L14,12 M2,12 L14,4" stroke="#8c5a32" stroke-width="1.3"/><text x="0" y="6" font-size="6" fill="#666">y</text><text x="0" y="16" font-size="6" fill="#666">z</text><text x="12" y="11" font-size="6" fill="#666">x</text></svg></div>
<div class="abs" style="left:43px;top:397.8px;font-size:10.7px;color:#000;white-space:nowrap;transform:scaleX(0.9);transform-origin:0 0">CS1</div>
<div class="abs" style="left:14px;top:419.5px;width:11px;height:1px;border-top:1px dotted #a0a0a0"></div>
<div class="abs" style="left:25px;top:412.5px;width:16px;height:16px"><svg width="16" height="14"><path d="M5,2 L15,2 L11,12 L1,12 Z" fill="none" stroke="#8c5a32" stroke-width="1.6"/></svg></div>
<div class="abs" style="left:43px;top:412.0px;width:36px;height:14.5px;background:#0a246a"></div>
<div class="abs" style="left:43px;top:413.8px;font-size:10.7px;color:#fff;white-space:nowrap;transform:scaleX(0.9);transform-origin:0 0">HOEHE</div>
<div class="abs" style="left:14px;top:435.5px;width:11px;height:1px;border-top:1px dotted #a0a0a0"></div>
<div class="abs" style="left:25px;top:428.5px;width:16px;height:16px"><svg width="16" height="16"><path d="M12,1 L3,15" stroke="#8c5a32" stroke-width="1.6" stroke-dasharray="3,2"/></svg></div>
<div class="abs" style="left:43px;top:429.8px;font-size:10.7px;color:#000;white-space:nowrap;transform:scaleX(0.9);transform-origin:0 0">A_5</div>
<div class="abs" style="left:14px;top:451.5px;width:11px;height:1px;border-top:1px dotted #a0a0a0"></div>
<div class="abs" style="left:25px;top:444.5px;width:16px;height:16px"><svg width="16" height="14"><path d="M5,2 L15,2 L11,12 L1,12 Z" fill="none" stroke="#8c5a32" stroke-width="1.6"/></svg></div>
<div class="abs" style="left:43px;top:444.0px;width:47px;height:14.5px;background:#0a246a"></div>
<div class="abs" style="left:43px;top:445.8px;font-size:10.7px;color:#fff;white-space:nowrap;transform:scaleX(0.9);transform-origin:0 0">22_5DGR</div>
<div class="abs" style="left:14px;top:467.5px;width:11px;height:1px;border-top:1px dotted #a0a0a0"></div>
<div class="abs" style="left:25px;top:460.5px;width:16px;height:16px"><svg width="16" height="14"><path d="M5,2 L15,2 L11,12 L1,12 Z" fill="none" stroke="#8c5a32" stroke-width="1.6"/></svg></div>
<div class="abs" style="left:43px;top:461.8px;font-size:10.7px;color:#000;white-space:nowrap;transform:scaleX(0.9);transform-origin:0 0">22_5FGR_</div>
<div class="abs" style="left:14px;top:483.5px;width:11px;height:1px;border-top:1px dotted #a0a0a0"></div>
<div class="abs" style="left:25px;top:476.5px;width:16px;height:16px"><svg width="16" height="14"><path d="M5,2 L15,2 L11,12 L1,12 Z" fill="none" stroke="#8c5a32" stroke-width="1.6"/></svg></div>
<div class="abs" style="left:43px;top:477.8px;font-size:10.7px;color:#000;white-space:nowrap;transform:scaleX(0.9);transform-origin:0 0">L</div>
<div class="abs" style="left:14px;top:499.5px;width:11px;height:1px;border-top:1px dotted #a0a0a0"></div>
<div class="abs" style="left:25px;top:492.5px;width:16px;height:16px"><svg width="16" height="14"><path d="M5,2 L15,2 L11,12 L1,12 Z" fill="none" stroke="#8c5a32" stroke-width="1.6"/></svg></div>
<div class="abs" style="left:43px;top:493.8px;font-size:10.7px;color:#000;white-space:nowrap;transform:scaleX(0.9);transform-origin:0 0">R</div>
<div class="abs" style="left:14px;top:515.5px;width:11px;height:1px;border-top:1px dotted #a0a0a0"></div>
<div class="abs" style="left:9px;top:511.5px;width:9px;height:9px;border:1px solid #7a8a99;background:linear-gradient(135deg,#fff,#d8d4c8)"><div class="abs" style="left:1px;top:3px;width:5px;height:1px;background:#000"></div><div class="abs" style="left:3px;top:1px;width:1px;height:5px;background:#000"></div></div>
<div class="abs" style="left:25px;top:508.5px;width:16px;height:16px"><svg width="16" height="16"><path d="M8,0 V16" stroke="#333" stroke-dasharray="1,1"/><ellipse cx="4" cy="9" rx="3" ry="3" fill="none" stroke="#4a6a7a"/><ellipse cx="12" cy="9" rx="3" ry="3" fill="none" stroke="#4a6a7a"/></svg></div>
<div class="abs" style="left:43px;top:509.8px;font-size:10.7px;color:#000;white-space:nowrap;transform:scaleX(1.0);transform-origin:0 0">Drehen 1</div>
<div class="abs" style="left:14px;top:531.5px;width:11px;height:1px;border-top:1px dotted #a0a0a0"></div>
<div class="abs" style="left:25px;top:524.5px;width:16px;height:16px"><svg width="16" height="16"><path d="M2,13 Q8,0 14,13" fill="none" stroke="#2a7ad0" stroke-width="1.5"/><path d="M1,3 H15 M1,15 H15" stroke="#2a5aa0" stroke-dasharray="1,2"/></svg></div>
<div class="abs" style="left:43px;top:525.8px;font-size:10.7px;color:#000;white-space:nowrap;transform:scaleX(1.0);transform-origin:0 0">Skizze 2</div>
<div class="abs" style="left:14px;top:547.5px;width:11px;height:1px;border-top:1px dotted #a0a0a0"></div>
<div class="abs" style="left:25px;top:540.5px;width:16px;height:16px"><svg width="16" height="14"><path d="M5,2 L15,2 L11,12 L1,12 Z" fill="none" stroke="#8c5a32" stroke-width="1.6"/></svg></div>
<div class="abs" style="left:43px;top:541.8px;font-size:10.7px;color:#000;white-space:nowrap;transform:scaleX(0.9);transform-origin:0 0">DTM1</div>
<div class="abs" style="left:14px;top:563.5px;width:11px;height:1px;border-top:1px dotted #a0a0a0"></div>
<div class="abs" style="left:25px;top:556.5px;width:16px;height:16px"><svg width="16" height="16"><path d="M2,13 Q8,0 14,13" fill="none" stroke="#2a7ad0" stroke-width="1.5"/><path d="M1,3 H15 M1,15 H15" stroke="#2a5aa0" stroke-dasharray="1,2"/></svg></div>
<div class="abs" style="left:43px;top:557.8px;font-size:10.7px;color:#000;white-space:nowrap;transform:scaleX(1.0);transform-origin:0 0">Skizze 4</div>
<div class="abs" style="left:14px;top:579.5px;width:11px;height:1px;border-top:1px dotted #a0a0a0"></div>
<div class="abs" style="left:25px;top:572.5px;width:16px;height:16px"><svg width="16" height="16"><path d="M6,1 L10,5 M10,1 L6,5 M1,10 L5,14 M5,10 L1,14 M11,9 L15,13 M15,9 L11,13" stroke="#8c5a32" stroke-width="1.3"/></svg></div>
<div class="abs" style="left:43px;top:573.8px;font-size:10.7px;color:#000;white-space:nowrap;transform:scaleX(1.0);transform-origin:0 0">Bezugspunkt ID 724</div>
<div class="abs" style="left:14px;top:595.5px;width:11px;height:1px;border-top:1px dotted #a0a0a0"></div>
<div class="abs" style="left:25px;top:588.5px;width:16px;height:16px"><svg width="16" height="16"><rect width="16" height="16" fill="#dcdcd8"/><path d="M2,13 Q8,2 14,13" fill="none" stroke="#b8b8b8" stroke-width="1.5"/></svg></div>
<div class="abs" style="left:43px;top:589.8px;font-size:10.7px;color:#aca899;white-space:nowrap;transform:scaleX(1.0);transform-origin:0 0">Skizze 5</div>
<div class="abs" style="left:14px;top:611.5px;width:11px;height:1px;border-top:1px dotted #a0a0a0"></div>
<div class="abs" style="left:25px;top:604.5px;width:16px;height:16px"><svg width="16" height="16"><path d="M1,7 L6,3 L15,3 L13,10 L8,14 L3,12 Z" fill="#c8f0f4" stroke="#3a8a98"/><path d="M6,3 L8,14" stroke="#3a8a98"/></svg></div>
<div class="abs" style="left:43px;top:605.8px;font-size:10.7px;color:#000;white-space:nowrap;transform:scaleX(1.0);transform-origin:0 0">Berandungsverbund 1</div>
<div class="abs" style="left:14px;top:627.5px;width:11px;height:1px;border-top:1px dotted #a0a0a0"></div>
<div class="abs" style="left:9px;top:623.5px;width:9px;height:9px;border:1px solid #7a8a99;background:linear-gradient(135deg,#fff,#d8d4c8)"><div class="abs" style="left:1px;top:3px;width:5px;height:1px;background:#000"></div><div class="abs" style="left:3px;top:1px;width:1px;height:5px;background:#000"></div></div>
<div class="abs" style="left:25px;top:620.5px;width:16px;height:16px"><svg width="16" height="16"><rect x="1" y="8" width="7" height="7" fill="#7ee0ec" stroke="#3a6a78"/><path d="M5,8 L12,1 L15,1 M8,8 L14,2" fill="none" stroke="#3a6a78"/></svg></div>
<div class="abs" style="left:43px;top:621.8px;font-size:10.7px;color:#000;white-space:nowrap;transform:scaleX(1.0);transform-origin:0 0">Profil 1</div>
<div class="abs" style="left:14px;top:643.5px;width:11px;height:1px;border-top:1px dotted #a0a0a0"></div>
<div class="abs" style="left:9px;top:639.5px;width:9px;height:9px;border:1px solid #7a8a99;background:linear-gradient(135deg,#fff,#d8d4c8)"><div class="abs" style="left:1px;top:3px;width:5px;height:1px;background:#000"></div><div class="abs" style="left:3px;top:1px;width:1px;height:5px;background:#000"></div></div>
<div class="abs" style="left:25px;top:636.5px;width:16px;height:16px"><svg width="16" height="16"><rect x="1.5" y="1.5" width="13" height="13" fill="#e8d8f8" stroke="#8a5ac8"/><path d="M2,9 L9,2 M2,14 L14,2 M7,14 L14,7" stroke="#9a7ad8"/></svg></div>
<div class="abs" style="left:43px;top:637.8px;font-size:10.7px;color:#000;white-space:nowrap;transform:scaleX(1.0);transform-origin:0 0">Füllen 1</div>
<div class="abs" style="left:14px;top:659.5px;width:11px;height:1px;border-top:1px dotted #a0a0a0"></div>
<div class="abs" style="left:25px;top:652.5px;width:16px;height:16px"><svg width="16" height="14"><path d="M1,5 H8 V1 L15,7 L8,13 V9 H1 Z" fill="#e01818" stroke="#800"/></svg></div>
<div class="abs" style="left:43px;top:653.8px;font-size:10.7px;color:#000;white-space:nowrap;transform:scaleX(1.0);transform-origin:0 0">Hier einfügen</div>
<div class="abs" style="left:3px;top:1123px;width:235px;height:16px;background:linear-gradient(#f3f1ea,#fefefb)"></div>
<div class="abs" style="left:4px;top:1124px;width:14px;height:14px;background:#eeede5;border-radius:2px;color:#c8c8c0;font-size:11px;text-align:center;line-height:14px">&lsaquo;</div>
<div class="abs" style="left:221px;top:1124px;width:15px;height:14px;background:#eeede5;border-radius:2px;color:#c8c8c0;font-size:11px;text-align:center;line-height:14px">&rsaquo;</div>
<div class="abs" style="left:239px;top:1123px;width:206px;height:16px;background:linear-gradient(#f3f1ea,#fefefb)"></div>
<div class="abs" style="left:240px;top:1124px;width:15px;height:14px;background:linear-gradient(90deg,#c8d6fb,#b8cbf6);border:1px solid #fff;border-radius:2px;box-shadow:0 0 0 0.5px #a8b8e0"><svg width="13" height="12"><path d="M8,2 L4,6 L8,10" fill="none" stroke="#4d6185" stroke-width="2"/></svg></div>
<div class="abs" style="left:256px;top:1124px;width:41px;height:14px;background:linear-gradient(90deg,#c8d6fb,#b8cbf6);border:1px solid #fff;border-radius:2px;box-shadow:0 0 0 0.5px #a8b8e0"><svg width="39" height="12" shape-rendering="crispEdges"><rect x="15" y="3" width="1" height="7" fill="#8ba0d8"/><rect x="17" y="3" width="1" height="7" fill="#8ba0d8"/><rect x="19" y="3" width="1" height="7" fill="#8ba0d8"/><rect x="21" y="3" width="1" height="7" fill="#8ba0d8"/></svg></div>
<div class="abs" style="left:428px;top:1124px;width:15px;height:14px;background:linear-gradient(90deg,#c8d6fb,#b8cbf6);border:1px solid #fff;border-radius:2px;box-shadow:0 0 0 0.5px #a8b8e0"><svg width="13" height="12"><path d="M5,2 L9,6 L5,10" fill="none" stroke="#4d6185" stroke-width="2"/></svg></div>
<div class="abs" style="left:449px;top:191px;width:1px;height:953px;background:#a8a8b0"></div>
<div class="abs" style="left:450px;top:191px;width:4px;height:953px;background:#e4e2dc"></div>
<div class="abs" style="left:454px;top:191px;width:2px;height:953px;background:#8898d8"></div>
<div class="abs" style="left:456px;top:191px;width:3px;height:953px;background:#dcdad4"></div>
<div class="abs" style="left:459px;top:191px;width:1px;height:953px;background:#98b8e8"></div>
<div class="abs" style="left:449px;top:618px;width:6px;height:51px;background:#c4d4f6;border-radius:1px"></div>
<div class="abs" style="left:455px;top:669px;width:6px;height:51px;background:#c4d4f6;border-radius:1px"></div>
<svg class="abs" style="left:449px;top:640px" width="6" height="8"><path d="M4.5,1 L1.5,4 L4.5,7" fill="none" stroke="#3a4a6a" stroke-width="1.4"/></svg>
<svg class="abs" style="left:455px;top:690px" width="6" height="8"><path d="M1.5,1 L4.5,4 L1.5,7" fill="none" stroke="#3a4a6a" stroke-width="1.4"/></svg>
<div id="view" class="abs"></div>
<svg class="abs" style="left:460px;top:195px" width="1390" height="948" viewBox="460 195 1390 948">
<defs>
<linearGradient id="bg" x1="0" y1="0" x2="0" y2="1">
<stop offset="0" stop-color="#005ea0"/><stop offset="0.25" stop-color="#004e8a"/><stop offset="0.5" stop-color="#003a6e"/><stop offset="0.75" stop-color="#002652"/><stop offset="1" stop-color="#001232"/>
</linearGradient>
<linearGradient id="c1g" gradientUnits="userSpaceOnUse" x1="1145" y1="447" x2="1288" y2="718">
<stop offset="0" stop-color="#6a6a6a"/><stop offset="0.12" stop-color="#a8a8a8"/><stop offset="0.35" stop-color="#ececec"/><stop offset="0.6" stop-color="#ffffff"/><stop offset="0.82" stop-color="#e0e0e0"/><stop offset="1" stop-color="#8c8c8c"/>
</linearGradient>
<linearGradient id="c2g" gradientUnits="userSpaceOnUse" x1="1234" y1="449" x2="1336" y2="646">
<stop offset="0" stop-color="#6a6a6a"/><stop offset="0.15" stop-color="#b0b0b0"/><stop offset="0.4" stop-color="#eeeeee"/><stop offset="0.65" stop-color="#ffffff"/><stop offset="0.85" stop-color="#d8d8d8"/><stop offset="1" stop-color="#8a8a8a"/>
</linearGradient>
<radialGradient id="domeg" gradientUnits="userSpaceOnUse" cx="1032" cy="688" r="242" fx="1005" fy="712">
<stop offset="0" stop-color="#ffffff"/><stop offset="0.45" stop-color="#fcfcfc"/><stop offset="0.7" stop-color="#e6e6e6"/><stop offset="0.85" stop-color="#c4c4c4"/><stop offset="0.95" stop-color="#a0a0a0"/><stop offset="1" stop-color="#8c8c8c"/>
</radialGradient>
</defs>
<rect x="460" y="195" width="1390" height="948" fill="url(#bg)"/>
<rect x="460" y="195" width="1390" height="1" fill="#6a9ad0"/>
<rect x="1849" y="195" width="1" height="948" fill="#4a80c0"/>
<polyline points="928,469 1000,430" fill="none" stroke="#7a2060" stroke-width="1.3"/>
<path d="M1238.0,445.0 A110.5,35 61.9 0 1 1342.0,640.0 L1200.9,715.4 L1096.9,520.4 Z" fill="url(#c2g)"/>
<path d="M1160.1,436.0 A156.3,34 60.1 0 1 1315.9,707.0 L1177.2,786.8 L1021.4,515.8 Z" fill="url(#c1g)"/>
<clipPath id="domeclip"><ellipse cx="1186.4" cy="597.6" rx="154.2" ry="31.1" transform="rotate(60.1 1186.4 597.6)"/><polygon points="588.2,-442.7 1784.6,1637.9 -2000,3000 -2000,-2000"/></clipPath>
<path d="M924,467 L937,469 A234,240 0 0 1 1127.2,469.2 A154.2,31.1 60.1 0 1 1265.9,702.8 A234,240 0 0 1 1131,906 Z" fill="url(#domeg)"/>
<path d="M937,469 A234,240 0 0 1 1127.2,469.2 A154.2,31.1 60.1 0 1 1265.9,702.8 A234,240 0 0 1 1262.5,731.7" fill="none" stroke="#e8a028" stroke-width="1.2"/>
<path d="M924,467 C925.7,467.3 928.3,465.5 934,469 C939.7,472.5 950.3,481.0 958,488 C965.7,495.0 973.2,502.3 980,511 C986.8,519.7 992.5,529.3 999,540 C1005.5,550.7 1012.5,563.0 1019,575 C1025.5,587.0 1031.7,599.2 1038,612 C1044.3,624.8 1050.8,638.3 1057,652 C1063.2,665.7 1069.0,680.0 1075,694 C1081.0,708.0 1086.8,722.3 1093,736 C1099.2,749.7 1106.2,764.0 1112,776 C1117.8,788.0 1123.3,797.7 1128,808 C1132.7,818.3 1137.0,829.0 1140,838 C1143.0,847.0 1144.5,854.5 1146,862 C1147.5,869.5 1149.2,877.0 1149,883 C1148.8,889.0 1147.7,894.3 1145,898 C1142.3,901.7 1135.0,903.8 1133,905  C1129.7,902.5 1119.7,896.2 1113,890 C1106.3,883.8 1099.8,877.0 1093,868 C1086.2,859.0 1078.8,847.3 1072,836 C1065.2,824.7 1058.7,812.3 1052,800 C1045.3,787.7 1038.7,775.0 1032,762 C1025.3,749.0 1018.5,735.2 1012,722 C1005.5,708.8 999.0,695.8 993,683 C987.0,670.2 981.5,657.2 976,645 C970.5,632.8 965.3,621.3 960,610 C954.7,598.7 949.0,587.8 944,577 C939.0,566.2 933.8,555.3 930,545 C926.2,534.7 923.2,523.8 921,515 C918.8,506.2 917.3,498.5 917,492 C916.7,485.5 917.8,480.2 919,476 C920.2,471.8 923.2,468.5 924,467 Z" fill="#323232"/>
<polygon points="932,464.5 920,470.5 917.5,479 917.5,500 924,515 930,490 936,470" fill="#323232"/>
<path d="M1133,905 C1129.7,902.5 1119.7,896.2 1113,890 C1106.3,883.8 1099.8,877.0 1093,868 C1086.2,859.0 1078.8,847.3 1072,836 C1065.2,824.7 1058.7,812.3 1052,800 C1045.3,787.7 1038.7,775.0 1032,762 C1025.3,749.0 1018.5,735.2 1012,722 C1005.5,708.8 999.0,695.8 993,683 C987.0,670.2 981.5,657.2 976,645 C970.5,632.8 965.3,621.3 960,610 C954.7,598.7 949.0,587.8 944,577 C939.0,566.2 933.8,555.3 930,545 C926.2,534.7 923.2,523.8 921,515 C918.8,506.2 917.3,498.5 917,492 C916.7,485.5 917.8,480.2 919,476 C920.2,471.8 923.2,468.5 924,467" fill="none" stroke="#ffffff" stroke-width="1.2" stroke-dasharray="3,1"/>
<polyline points="998,431 1195,324 1388,756 1148,895" fill="none" stroke="#7a2060" stroke-width="1.3" opacity="1"/>
<polyline points="937,474 983,580 1015.5,660 1058,760 1108,880" fill="none" stroke="#80203a" stroke-width="1.3" opacity="1"/>
<polyline points="873,321 997,390 1010,963 887,894 873,321" fill="none" stroke="#dc2626" stroke-width="1.3" opacity="1"/>
<polyline points="788,484 912,554 1101,990 978,921 788,484" fill="none" stroke="#dc2626" stroke-width="1.3" opacity="1"/>
<polyline points="876,437 997,509" fill="none" stroke="#f0f040" stroke-width="1.1" opacity="1"/>
<polyline points="1258,359 1001,506" fill="none" stroke="#f0f040" stroke-width="1.1" opacity="1"/>
<polyline points="1001,506 876,437" fill="none" stroke="#f0f040" stroke-width="1.1" opacity="1"/>
<polyline points="876,437 1133,290" fill="none" stroke="#f0f040" stroke-width="1.1" opacity="1"/>
<polyline points="1133,290 1322,721" fill="none" stroke="#f0f040" stroke-width="1.1" opacity="1"/>
<polyline points="1258,359 1447,790" fill="none" stroke="#f0f040" stroke-width="1.1" opacity="1"/>
<polyline points="1001,506 1190,937" fill="none" stroke="#f0f040" stroke-width="1.1" opacity="1"/>
<polyline points="876,437 1065,868" fill="none" stroke="#f0f040" stroke-width="1.1" opacity="1"/>
<polyline points="1322,721 1447,790" fill="none" stroke="#f0f040" stroke-width="1.1" opacity="1"/>
<polyline points="1447,790 1190,937" fill="none" stroke="#f0f040" stroke-width="1.1" opacity="1"/>
<polyline points="1065,868 1322,721" fill="none" stroke="#f0f040" stroke-width="1.1" opacity="1"/>
<polyline points="1227.5,505.5 1352.5,574.5" fill="none" stroke="#f0f040" stroke-width="1.1" opacity="1"/>
<polyline points="1352.5,574.5 1095.5,721.5" fill="none" stroke="#f0f040" stroke-width="1.1" opacity="1"/>
<polyline points="1095.5,721.5 970.5,652.5" fill="none" stroke="#f0f040" stroke-width="1.1" opacity="1"/>
<polyline points="970.5,652.5 1227.5,505.5" fill="none" stroke="#f0f040" stroke-width="1.1" opacity="1"/>
<polyline points="1133,290 1258,359" fill="none" stroke="#f0f040" stroke-width="2" opacity="1"/>
<polyline points="1190,937 1065,868" fill="none" stroke="#f0f040" stroke-width="2" opacity="1"/>
<polyline points="1334.6,731 1446.6,793.3" fill="none" stroke="#f0f040" stroke-width="1.1" opacity="1"/>
<polyline points="751.5,583.5 873,652 1267,1009 1145,938 751.5,583.5" fill="none" stroke="#f0f040" stroke-width="1.1" opacity="1"/>
<text x="1198" y="322" fill="#f0f040" font-family="Liberation Sans" font-size="16" textLength="53" lengthAdjust="spacingAndGlyphs">KREUZ</text>
<text x="1325" y="726" fill="#f0f040" font-family="Liberation Sans" font-size="16" textLength="66" lengthAdjust="spacingAndGlyphs">GRUND</text>
<text x="1190" y="941.5" fill="#f0f040" font-family="Liberation Sans" font-size="16" textLength="49" lengthAdjust="spacingAndGlyphs">DTM1</text>
<text x="1269" y="1011" fill="#f0f040" font-family="Liberation Sans" font-size="16" textLength="81" lengthAdjust="spacingAndGlyphs">22_5FGR_</text>
<text x="1010.5" y="964" fill="#e02828" font-family="Liberation Sans" font-size="16" textLength="77" lengthAdjust="spacingAndGlyphs">22_5DGR</text>
<text x="1103.7" y="991.5" fill="#e02828" font-family="Liberation Sans" font-size="16" textLength="57" lengthAdjust="spacingAndGlyphs">HOEHE</text>
<rect x="1091" y="711" width="36" height="18" fill="#072e64"/><text x="1092" y="724" fill="#f0f040" font-family="Liberation Sans" font-size="16" textLength="33.5" lengthAdjust="spacingAndGlyphs">AUF</text>
<rect x="996" y="496" width="10" height="17" fill="#072e64"/><text x="997.5" y="510" fill="#f0f040" font-family="Liberation Sans" font-size="14" textLength="7" lengthAdjust="spacingAndGlyphs">L</text>
</svg>
<div class="abs" style="left:1851px;top:195px;width:73px;height:949px;background:linear-gradient(90deg,#f2f1ea,#ecebe0)"></div>
<div class="abs" style="left:1851px;top:191px;width:73px;height:4px;background:#e8e6dc"></div>
<div class="abs" style="left:1853px;top:199px;width:38px;height:1px;border-top:1px dotted #a8a69c"></div>
<div class="abs" style="left:1893px;top:199px;width:29px;height:1px;border-top:1px dotted #a8a69c"></div>
<div class="abs" style="left:1853px;top:353px;width:38px;height:1px;border-top:1px dotted #a8a69c"></div>
<div class="abs" style="left:1853px;top:420px;width:38px;height:1px;border-top:1px dotted #a8a69c"></div>
<div class="abs" style="left:1853px;top:743px;width:38px;height:1px;border-top:1px dotted #a8a69c"></div>
<svg class="abs" style="left:1853px;top:208px" width="24" height="24" viewBox="0 0 24 24"><path d="M7,17 A5.5,5.5 0 1 1 16,12" fill="none" stroke="#a0a098" stroke-width="2.6"/><path d="M12,11 L19,11 L17,17 Z" fill="#a0a098"/></svg>
<svg class="abs" style="left:1853px;top:237px" width="24" height="24" viewBox="0 0 24 24"><path d="M17,17 A5.5,5.5 0 1 0 8,12" fill="none" stroke="#a0a098" stroke-width="2.6"/><path d="M12,11 L5,11 L7,17 Z" fill="#a0a098"/></svg>
<svg class="abs" style="left:1853px;top:265px" width="24" height="24" viewBox="0 0 24 24"><rect x="4" y="4" width="14" height="11" fill="#fff" stroke="#1a2a6a" stroke-width="1.3"/><rect x="4" y="4" width="14" height="2" fill="#1a2a6a"/><rect x="7" y="8" width="14" height="12" fill="#fff" stroke="#1a2a6a" stroke-width="1.3"/><rect x="7" y="8" width="14" height="2" fill="#1a2a6a"/><path d="M10,15 L13,18 L19,12" fill="none" stroke="#10a010" stroke-width="2"/></svg>
<svg class="abs" style="left:1853px;top:293px" width="24" height="24" viewBox="0 0 24 24"><rect x="5" y="5" width="15" height="14" fill="#fff" stroke="#1a2a6a" stroke-width="1.3"/><rect x="5" y="5" width="15" height="2" fill="#1a2a6a"/><path d="M9,10 L16,17 M16,10 L9,17" stroke="#c01010" stroke-width="1.8"/></svg>
<svg class="abs" style="left:1853px;top:319px" width="24" height="24" viewBox="0 0 24 24"><rect x="4" y="4" width="16" height="16" fill="#fff" stroke="#1a2a6a" stroke-width="1.3"/><rect x="4" y="4" width="16" height="2" fill="#1a2a6a"/><path d="M4,12 H12 V20" stroke="#1a2a6a" stroke-width="1.3" fill="none"/></svg>
<svg class="abs" style="left:1853px;top:365px" width="24" height="24" viewBox="0 0 24 24"><path d="M3,8 H8 V16 H15 V21 H3 Z" fill="#f0e040" stroke="#8a7a20"/><rect x="13" y="3" width="7" height="7" fill="#fff" stroke="#555"/></svg>
<svg class="abs" style="left:1853px;top:391px" width="24" height="24" viewBox="0 0 24 24"><rect x="3" y="4" width="10" height="6" fill="none" stroke="#b4b4b0" stroke-width="1.2"/><rect x="7" y="10" width="10" height="6" fill="none" stroke="#b4b4b0" stroke-width="1.2"/><path d="M15,17 H21 L16,22 H21" fill="none" stroke="#b4b4b0"/></svg>
<svg class="abs" style="left:1853px;top:428px" width="24" height="24" viewBox="0 0 24 24"><path d="M3,15 Q8,6 12,12 Q16,18 21,9" fill="none" stroke="#2a7ad0" stroke-width="1.5"/><path d="M2,6 H22 M2,20 H22" stroke="#2a5aa0" stroke-dasharray="1,2"/></svg>
<svg class="abs" style="left:1853px;top:458px" width="24" height="24" viewBox="0 0 24 24"><path d="M8,6 H21 L16,18 H3 Z" fill="none" stroke="#8c5a32" stroke-width="1.8"/></svg>
<svg class="abs" style="left:1853px;top:487px" width="24" height="24" viewBox="0 0 24 24"><path d="M15,3 L8,21" stroke="#8c5a32" stroke-width="1.8" stroke-dasharray="4,2"/></svg>
<svg class="abs" style="left:1853px;top:513px" width="24" height="24" viewBox="0 0 24 24"><path d="M3,16 Q7,6 12,13 Q16,19 21,8" fill="none" stroke="#8c5a32" stroke-width="1.8"/></svg>
<svg class="abs" style="left:1853px;top:539px" width="24" height="24" viewBox="0 0 24 24"><path d="M12,3 L9,21 M3,12 H20 M5,6 L18,17" stroke="#8c5a32" stroke-width="1.4"/><text x="1" y="7" font-size="6" fill="#777">y</text><text x="1" y="22" font-size="6" fill="#777">z</text><text x="18" y="11" font-size="6" fill="#777">x</text></svg>
<svg class="abs" style="left:1853px;top:569px" width="24" height="24" viewBox="0 0 24 24"><path d="M9,3 l4,4 m0,-4 l-4,4 M3,12 l4,4 m0,-4 l-4,4 M15,12 l4,4 m0,-4 l-4,4" stroke="#8c5a32" stroke-width="1.4"/></svg>
<svg class="abs" style="left:1881px;top:579px" width="6" height="4" viewBox="0 0 6 4"><path d="M0,0 H6 L3,4Z" fill="#000"/></svg>
<svg class="abs" style="left:1853px;top:598px" width="24" height="24" viewBox="0 0 24 24"><path d="M3,10 H17 M3,7 V13 M17,7 V13" stroke="#000" stroke-width="1.2"/><path d="M16,4 L21,8 M18,3 L19,9 M15,6 L22,6" stroke="#e8c800" stroke-width="1.3"/><rect x="3" y="15" width="17" height="6" fill="#c8c060" stroke="#555"/></svg>
<svg class="abs" style="left:1853px;top:624px" width="24" height="24" viewBox="0 0 24 24"><path d="M8,4 L12,10 M11,4 L7,10 M14,8 L18,12" stroke="#8c5a32" stroke-width="1.3"/><rect x="3" y="15" width="17" height="6" fill="#c8c060" stroke="#555"/></svg>
<svg class="abs" style="left:1853px;top:652px" width="24" height="24" viewBox="0 0 24 24"><path d="M4,18 L10,10 L15,14 L20,6" fill="none" stroke="#1a2a6a" stroke-width="1.5"/><path d="M3,20 H21" stroke="#e8d800" stroke-width="2"/></svg>
<svg class="abs" style="left:1853px;top:683px" width="24" height="24" viewBox="0 0 24 24"><path d="M3,12 L8,5 H20 V15 L14,21 H3 Z" fill="none" stroke="#8c5a32" stroke-width="1.5"/><path d="M8,5 V15 H20 M3,21 L8,15" stroke="#8c5a32" stroke-width="1.2" fill="none"/></svg>
<svg class="abs" style="left:1853px;top:708px" width="24" height="24" viewBox="0 0 24 24"><path d="M4,20 L10,14 M14,10 L20,4" stroke="#8c5a32" stroke-width="2"/><rect x="7" y="9" width="10" height="6" rx="3" transform="rotate(-45 12 12)" fill="none" stroke="#8c5a32" stroke-width="1.8"/></svg>
<svg class="abs" style="left:1853px;top:748px" width="24" height="24" viewBox="0 0 24 24"><rect x="3" y="5" width="13" height="9" fill="#f8f4a0" stroke="#555"/><path d="M16,9 H21 L13,21" fill="none" stroke="#000" stroke-width="1.2"/><path d="M12,18 L13,21 L16,19" fill="none" stroke="#000"/></svg>
<svg class="abs" style="left:1853px;top:775px" width="24" height="24" viewBox="0 0 24 24"><rect x="3" y="4" width="11" height="7" fill="none" stroke="#b4b4b0" stroke-width="1.2"/><rect x="6" y="10" width="11" height="7" fill="none" stroke="#b4b4b0" stroke-width="1.2"/><path d="M15,17 H21 L16,22 H21" fill="none" stroke="#b4b4b0"/></svg>
<svg class="abs" style="left:1853px;top:804px" width="24" height="24" viewBox="0 0 24 24"><path d="M6,6 Q12,3 18,5 V17 Q12,21 6,18 Z" fill="#5a9ae8" stroke="#1a4a9a"/><path d="M6,6 Q9,10 6,12 Q3,14 6,18" fill="#8ac0f8" stroke="#1a4a9a"/></svg>
<svg class="abs" style="left:1853px;top:834px" width="24" height="24" viewBox="0 0 24 24"><path d="M4,9 Q10,4 19,5 V17 Q10,16 4,20 Z" fill="#8ee4f0" fill-opacity="0.4" stroke="#3a8a98"/></svg>
<svg class="abs" style="left:1853px;top:861px" width="24" height="24" viewBox="0 0 24 24"><rect x="4" y="11" width="9" height="9" fill="#8ee4f0" stroke="#3a8a98"/><path d="M8,11 L15,4 H20 V9 L13,16" fill="none" stroke="#3a8a98"/></svg>
<svg class="abs" style="left:1853px;top:888px" width="24" height="24" viewBox="0 0 24 24"><path d="M12,2 V22" stroke="#000" stroke-dasharray="2,1.5"/><ellipse cx="6" cy="13" rx="4.5" ry="4" fill="none" stroke="#2a6a9a" stroke-width="1.3"/><ellipse cx="18" cy="13" rx="4.5" ry="4" fill="none" stroke="#2a6a9a" stroke-width="1.3"/></svg>
<svg class="abs" style="left:1853px;top:918px" width="24" height="24" viewBox="0 0 24 24"><path d="M3,6 L12,4 L20,14 L20,21 L13,19 Z" fill="#8ee4f0" stroke="#3a8a98"/><path d="M12,4 L13,19" stroke="#3a8a98"/><path d="M13,19 L20,21 L20,14Z" fill="#c8c8c8"/></svg>
<svg class="abs" style="left:1853px;top:945px" width="24" height="24" viewBox="0 0 24 24"><path d="M3,12 Q8,5 14,6 Q18,3 21,5 L20,13 Q15,15 12,19 L4,18 Z" fill="#e8f8fa" stroke="#3a8a98"/><path d="M14,6 L12,19" stroke="#3a8a98"/></svg>
<svg class="abs" style="left:1853px;top:974px" width="24" height="24" viewBox="0 0 24 24"><rect x="3" y="6" width="18" height="15" fill="#8ee4f0"/><path d="M8,3 V12 Q12,16 16,12 V3" fill="#fff" stroke="#444" stroke-dasharray="2,1"/></svg>
<svg class="abs" style="left:1853px;top:1002px" width="24" height="24" viewBox="0 0 24 24"><rect x="4" y="4" width="16" height="16" fill="#fff" stroke="#444" stroke-width="1.3"/><rect x="7" y="7" width="10" height="10" fill="#b8eef4" stroke="#444"/></svg>
<svg class="abs" style="left:1853px;top:1029px" width="24" height="24" viewBox="0 0 24 24"><path d="M3,20 L20,20 L4,4 Z" fill="none" stroke="#000" stroke-dasharray="1.5,1.5"/><path d="M4,4 L8,16 L20,20" fill="none" stroke="#1a2a8a" stroke-width="1.3"/></svg>
<svg class="abs" style="left:1853px;top:1058px" width="24" height="24" viewBox="0 0 24 24"><path d="M3,9 L9,4 H14 L21,20 H9 Z" fill="#8ee4f0" stroke="#3a8a98"/><path d="M3,9 L3,18 L9,20" fill="#fff" stroke="#3a8a98"/></svg>
<svg class="abs" style="left:1853px;top:1086px" width="24" height="24" viewBox="0 0 24 24"><path d="M3,4 Q16,4 18,16 L18,20 L13,16 Q12,8 4,8 Z" fill="#8ee4f0" stroke="#3a8a98"/><path d="M13,16 L18,20" stroke="#aaa" stroke-width="2"/></svg>
<svg class="abs" style="left:1853px;top:1113px" width="24" height="24" viewBox="0 0 24 24"><path d="M3,4 L12,4 L20,13 L16,17 Q14,10 3,8Z" fill="#8ee4f0" stroke="#3a8a98"/><path d="M16,17 L20,20 V13" fill="#c8c8c8"/></svg>
<svg class="abs" style="left:1894px;top:208px" width="24" height="24" viewBox="0 0 24 24"><path d="M3,6 Q8,6 9,11 V19 H3 Z" fill="#f8e8fa" stroke="none"/><path d="M21,6 Q16,6 15,11 V19 H21 Z" fill="#f8e8fa" stroke="none"/><path d="M3,6 Q8,6 9,11 V19 H3 M21,6 Q16,6 15,11 V19 H21" fill="none" stroke="#6a3a8a" stroke-width="1.2"/><path d="M12,2 V22" stroke="#444" stroke-width="1.2"/></svg>
<svg class="abs" style="left:1894px;top:237px" width="24" height="24" viewBox="0 0 24 24"><rect x="10" y="4" width="10" height="10" fill="none" stroke="#b4b4b0" stroke-width="1.2"/><circle cx="10" cy="14" r="5" fill="none" stroke="#b4b4b0" stroke-width="1.2"/></svg>
<svg class="abs" style="left:1894px;top:265px" width="24" height="24" viewBox="0 0 24 24"><rect x="10" y="4" width="10" height="10" fill="none" stroke="#b4b4b0" stroke-width="1.2"/><circle cx="10" cy="14" r="5" fill="none" stroke="#b4b4b0" stroke-width="1.2"/></svg>
<svg class="abs" style="left:1894px;top:402px" width="24" height="24" viewBox="0 0 24 24"><rect x="10" y="4" width="10" height="10" fill="none" stroke="#b4b4b0" stroke-width="1.2"/><circle cx="10" cy="14" r="5" fill="none" stroke="#b4b4b0" stroke-width="1.2"/></svg>
<svg class="abs" style="left:1894px;top:293px" width="24" height="24" viewBox="0 0 24 24"><rect x="4" y="4" width="16" height="16" fill="none" stroke="#b4b4b0" stroke-width="1.3"/><path d="M8,8 h1 M12,8 h1 M16,8 h1 M8,12 h1 M12,12 h1 M16,12 h1 M8,16 h1 M12,16 h1 M16,16 h1" stroke="#b4b4b0" stroke-width="1.5"/></svg>
<svg class="abs" style="left:1894px;top:319px" width="24" height="24" viewBox="0 0 24 24"><path d="M3,17 Q8,10 12,14 Q16,18 21,12 M3,12 Q8,5 12,9 Q16,13 21,7" fill="none" stroke="#9a4ac8" stroke-width="1.4"/><path d="M3,19 H21" stroke="#9a4ac8"/></svg>
<svg class="abs" style="left:1894px;top:348px" width="24" height="24" viewBox="0 0 24 24"><ellipse cx="12" cy="5" rx="6" ry="2.5" fill="#f4e8fa" stroke="#9a4ac8" stroke-width="1.3"/><path d="M6,5 V19 Q12,23 18,19 V5" fill="none" stroke="#9a4ac8" stroke-width="1.3"/><path d="M7,10 L17,8 M7,14 L17,12 M7,18 L17,16" stroke="#9a4ac8"/></svg>
<svg class="abs" style="left:1894px;top:376px" width="24" height="24" viewBox="0 0 24 24"><rect x="5" y="4" width="14" height="16" fill="none" stroke="#b4b4b0" stroke-width="1.3"/><path d="M8,12 H15 M12,9 L15,12 L12,15" fill="none" stroke="#b4b4b0" stroke-width="1.2"/></svg>
<svg class="abs" style="left:1894px;top:432px" width="24" height="24" viewBox="0 0 24 24"><rect x="5" y="5" width="14" height="14" fill="#e8d8f8" stroke="#9a4ac8" stroke-width="1.3"/><path d="M5,12 L12,5 M5,19 L19,5 M12,19 L19,12" stroke="#9a4ac8"/></svg>
<svg class="abs" style="left:1894px;top:461px" width="24" height="24" viewBox="0 0 24 24"><path d="M4,4 H14 L20,10 M14,4 V10 H20" fill="none" stroke="#b4b4b0" stroke-width="1.2"/><path d="M12,12 L4,20" stroke="#b4b4b0" stroke-dasharray="2,2"/></svg>
<svg class="abs" style="left:1894px;top:487px" width="24" height="24" viewBox="0 0 24 24"><path d="M5,5 V19 H19" fill="none" stroke="#b4b4b0" stroke-width="1.3"/></svg>
<svg class="abs" style="left:1894px;top:515px" width="24" height="24" viewBox="0 0 24 24"><path d="M4,8 L8,4 H20 V19 H4 Z M4,8 H16 V19 M16,8 L20,4" fill="none" stroke="#b4b4b0" stroke-width="1.2"/><path d="M9,11 L12,14 L15,11" fill="none" stroke="#b4b4b0"/></svg>
<svg class="abs" style="left:3px;top:5px" width="14" height="14" viewBox="0 0 14 14"><path d="M1,3 L3,1 H13 V11 L11,13 H1 Z" fill="#6ad0c8" stroke="#0a2a4a"/><path d="M11,13 V3 L13,1" fill="#2a8a90" stroke="#0a2a4a"/></svg>
<div class="abs" style="left:1851px;top:2px;width:21px;height:21px;border:1px solid #fff;border-radius:3px;background:radial-gradient(circle at 30% 30%,#6aa6ff,#2a6cf0 55%,#1a50d8)"><div class="abs" style="left:5px;top:13px;width:8px;height:3px;background:#fff"></div></div>
<div class="abs" style="left:1874px;top:2px;width:21px;height:21px;border:1px solid #fff;border-radius:3px;background:radial-gradient(circle at 30% 30%,#6aa6ff,#2a6cf0 55%,#1a50d8)"><div class="abs" style="left:7px;top:3px;width:9px;height:8px;border:1px solid #fff;border-top-width:2px"></div><div class="abs" style="left:3px;top:7px;width:9px;height:9px;border:1px solid #fff;border-top-width:2px;background:#3a78f0"></div></div>
<div class="abs" style="left:1897px;top:2px;width:21px;height:21px;border:1px solid #fff;border-radius:3px;background:radial-gradient(circle at 30% 30%,#f8a080,#e05a30 55%,#c83a10)"><svg width="19" height="19"><path d="M5,5 L14,14 M14,5 L5,14" stroke="#fff" stroke-width="2.2"/></svg></div>
<div class="abs" style="left:1919px;top:0;width:5px;height:100px;background:linear-gradient(90deg,#8ab0f0,#c8d8f8)"></div>
<div class="abs" style="left:1919px;top:0;width:5px;height:12px;background:#e05a40"></div>
<div class="abs" style="left:11px;top:125px;width:6px;height:6px;border-radius:3px;background:#0a0ae0"></div>
<div class="abs" style="left:11px;top:157px;width:6px;height:6px;border-radius:3px;background:#0a0ae0"></div>
<div class="abs" style="left:11px;top:173px;width:6px;height:6px;border-radius:3px;background:#0a0ae0"></div>
<svg class="abs" style="left:8px;top:139px" width="12" height="12" viewBox="0 0 12 12"><rect x="0.5" y="0.5" width="11" height="11" fill="#f0e020" stroke="#000"/><path d="M0.5,0.5 H6 L3,6 L6,11.5 H0.5Z" fill="#30d8f0" stroke="#000" stroke-width="0.8"/><path d="M3,1 V11 M3,6 L8,1 M3,6 L8,11" stroke="#000" stroke-width="1"/></svg>
<div class="abs" style="left:1903px;top:111px;width:16px;height:80px;background:#f4f3ee"></div>
<div class="abs" style="left:1904px;top:112px;width:15px;height:15px;border:1px solid #b8c8e8;border-radius:2px;background:linear-gradient(#d8e2fc,#bccdf6)"><svg width="13" height="13"><path d="M3,8 L6.5,4.5 L10,8" fill="none" stroke="#4d6185" stroke-width="1.8"/></svg></div>
<div class="abs" style="left:1904px;top:166px;width:15px;height:7px;border:1px solid #b8c8e8;border-radius:2px;background:#c8d6fa"></div>
<div class="abs" style="left:1904px;top:176px;width:15px;height:15px;border:1px solid #b8c8e8;border-radius:2px;background:linear-gradient(#d8e2fc,#bccdf6)"><svg width="13" height="13"><path d="M3,5 L6.5,8.5 L10,5" fill="none" stroke="#4d6185" stroke-width="1.8"/></svg></div>
<div class="abs" style="left:0;top:1143px;width:1924px;height:27px;background:#D4D0C8"></div>
<div class="abs" style="left:1574px;top:1145px;width:1px;height:24px;background:#f8f8f4;border-left:1px solid #b8b4a8"></div>
<div class="abs" style="left:1606px;top:1145px;width:1px;height:24px;background:#f8f8f4;border-left:1px solid #b8b4a8"></div>
<div class="abs" style="left:1862px;top:1145px;width:1px;height:24px;background:#f8f8f4;border-left:1px solid #b8b4a8"></div>
<svg class="abs" style="left:1583px;top:1150px" width="16" height="15" viewBox="0 0 16 15"><path d="M8,1 L15,14 H1 Z" fill="#f8f000" stroke="#000" stroke-width="1.2"/><path d="M8,5 V10" stroke="#000" stroke-width="2"/><rect x="7" y="11" width="2" height="2" fill="#000"/></svg>
<div class="abs" style="left:1613px;top:1149px;font-size:11.5px">2 gewählt</div>
<div class="abs" style="left:1705px;top:1148px;width:155px;height:19px;border:1px solid #7f9db9;background:#fff"><span class="abs" style="left:4px;top:2px;font-size:11.5px">Smart</span><div class="abs" style="left:136px;top:1px;width:16px;height:15px;border-radius:2px;background:linear-gradient(#c8d8fb,#b0c6f4)"><svg width="16" height="15"><path d="M4,5 L8,9 L12,5" fill="none" stroke="#4d6185" stroke-width="2"/></svg></div></div>
<svg class="abs" style="left:1869px;top:1148px" width="12" height="20" viewBox="0 0 12 20"><circle cx="6" cy="3" r="2.5" fill="#f0b0b0" stroke="#a06060" stroke-width="0.8"/><rect x="4" y="6" width="4" height="4" fill="#f0f060" stroke="#909040" stroke-width="0.8"/><circle cx="6" cy="15" r="4.5" fill="#30b030" stroke="#106010"/></svg>
<div class="abs" style="left:0;top:1169px;width:1924px;height:5px;background:linear-gradient(#3a80f0,#2a6ae0)"></div>
<div class="abs" style="left:0;top:1169px;width:96px;height:5px;background:linear-gradient(#4aa84a,#2a8a30)"></div>
<div class="abs" style="left:1810px;top:1169px;width:114px;height:5px;background:linear-gradient(#2aa0f0,#1a88e0)"></div>
</body></html>
